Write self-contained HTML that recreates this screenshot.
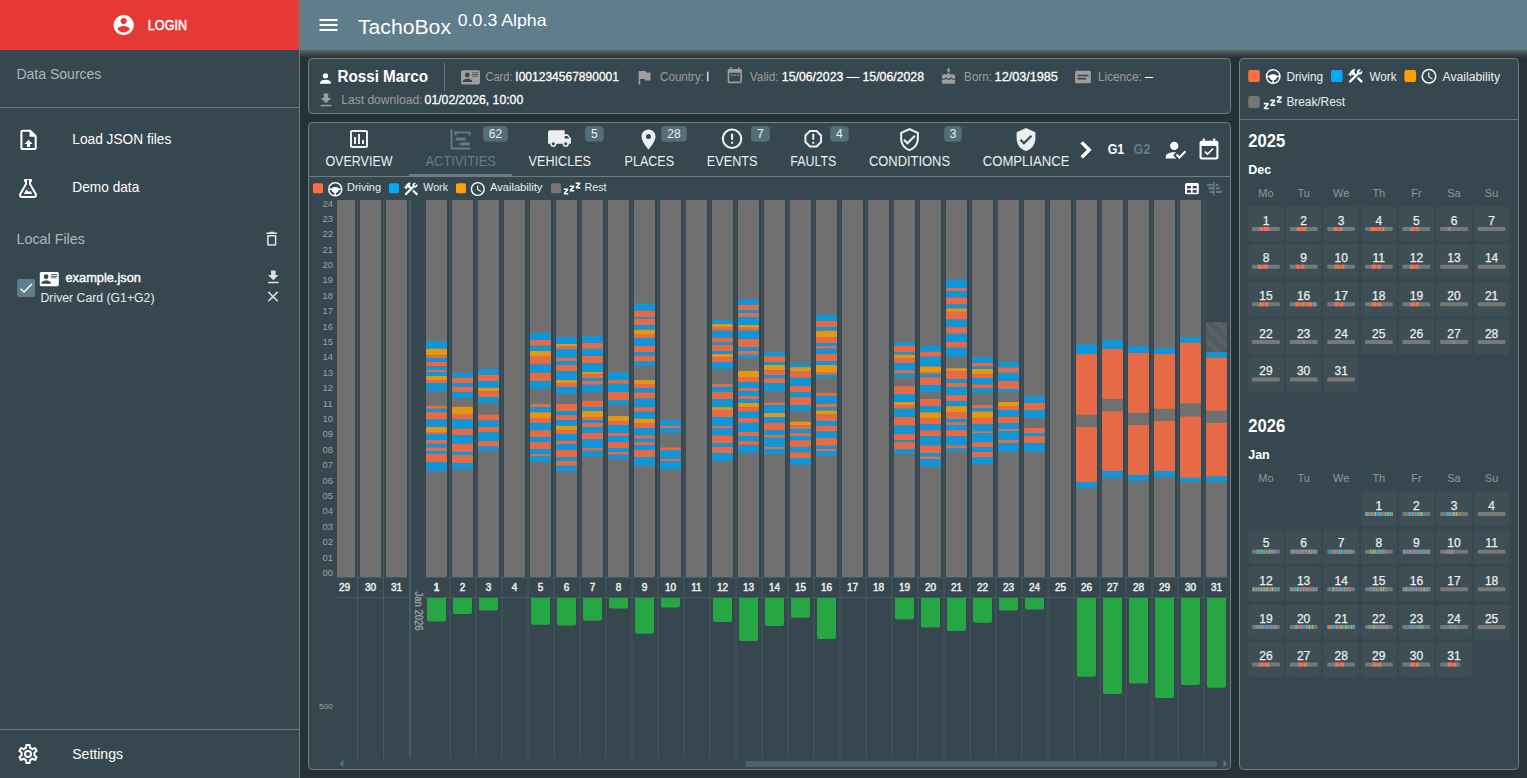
<!DOCTYPE html>
<html><head><meta charset="utf-8"><title>TachoBox</title><style>
*{margin:0;padding:0;box-sizing:border-box}
html,body{width:1527px;height:778px;overflow:hidden;background:#263238;font-family:"Liberation Sans", sans-serif}
.a{position:absolute}
svg text{font-family:"Liberation Sans", sans-serif}
</style></head>
<body>

<svg class="a" style="left:0;top:0" width="1527" height="778" viewBox="0 0 1527 778">
<rect x="0.00" y="0.00" width="299.00" height="778.00" rx="0" fill="#37474f" />
<rect x="299.00" y="0.00" width="1.00" height="778.00" rx="0" fill="#6f7b80" />
<rect x="0.00" y="0.00" width="299.00" height="50.00" rx="0" fill="#e53935" />
<path transform="translate(111.40,12.90) scale(1.0208)" d="M12,19.2C9.5,19.2 7.29,17.92 6,16C6.03,14 10,12.9 12,12.9C14,12.9 17.97,14 18,16C16.71,17.92 14.5,19.2 12,19.2M12,5A3,3 0 0,1 15,8A3,3 0 0,1 12,11A3,3 0 0,1 9,8A3,3 0 0,1 12,5M12,2A10,10 0 0,0 2,12A10,10 0 0,0 12,22A10,10 0 0,0 22,12C22,6.47 17.5,2 12,2Z" fill="#fff" />
<text x="147.80" y="30.10" font-size="15" font-weight="normal" fill="#fff" text-anchor="start" textLength="39.30" lengthAdjust="spacingAndGlyphs" stroke="#fff" stroke-width="0.5">LOGIN</text>
<text x="16.40" y="78.90" font-size="15" font-weight="normal" fill="#b0b8bc" text-anchor="start" textLength="85.00" lengthAdjust="spacingAndGlyphs" >Data Sources</text>
<rect x="0.00" y="107.00" width="299.00" height="1.00" rx="0" fill="#6f7b80" />
<path transform="translate(16.30,127.60) scale(1.0208)" d="M14,2H6A2,2 0 0,0 4,4V20A2,2 0 0,0 6,22H18A2,2 0 0,0 20,20V8L14,2M18,20H6V4H13V9H18V20M12,12L16,16H13.5V19H10.5V16H8L12,12Z" fill="#fff" />
<text x="72.30" y="144.10" font-size="15" font-weight="normal" fill="#fff" text-anchor="start" textLength="99.00" lengthAdjust="spacingAndGlyphs" >Load JSON files</text>
<path transform="translate(16.00,176.00) scale(1.0000)" d="M5,19A1,1 0 0,0 6,20H18A1,1 0 0,0 19,19C19,18.79 18.93,18.59 18.82,18.43L13,8.35V4H11V8.35L5.18,18.43C5.07,18.59 5,18.79 5,19M6,22A3,3 0 0,1 3,19C3,18.4 3.18,17.84 3.5,17.37L9,7.81V6A1,1 0 0,1 8,5V4A1,1 0 0,1 9,3H15A1,1 0 0,1 16,4V5A1,1 0 0,1 15,6V7.81L20.5,17.37C20.82,17.84 21,18.4 21,19A3,3 0 0,1 18,22H6M13,16L14.34,14.66L16.27,18H7.73L10.39,13.39L13,16M12.5,12A0.5,0.5 0 0,1 13,12.5A0.5,0.5 0 0,1 12.5,13A0.5,0.5 0 0,1 12,12.5A0.5,0.5 0 0,1 12.5,12Z" fill="#fff" />
<text x="72.30" y="192.00" font-size="15" font-weight="normal" fill="#fff" text-anchor="start" textLength="67.00" lengthAdjust="spacingAndGlyphs" >Demo data</text>
<text x="16.50" y="243.80" font-size="15" font-weight="normal" fill="#b0b8bc" text-anchor="start" textLength="68.40" lengthAdjust="spacingAndGlyphs" >Local Files</text>
<path transform="translate(262.50,229.50) scale(0.7708)" d="M6,19A2,2 0 0,0 8,21H16A2,2 0 0,0 18,19V7H6V19M8,9H16V19H8V9M15.5,4L14.5,3H9.5L8.5,4H5V6H19V4H15.5Z" fill="#e0e0e0" />
<rect x="17.10" y="279.10" width="18.00" height="18.00" rx="2" fill="#607d8b" />
<path transform="translate(17.60,279.60) scale(0.7083)" d="M21,7L9,19L3.5,13.5L4.91,12.09L9,16.17L19.59,5.59L21,7Z" fill="#fff" />
<path transform="translate(39.80,269.60) scale(0.7917)" d="M2,3H22C23.05,3 24,3.95 24,5V19C24,20.05 23.05,21 22,21H2C0.95,21 0,20.05 0,19V5C0,3.95 0.95,3 2,3M14,6V7H22V6H14M14,8V9H21.5L22,9V8H14M14,10V11H21V10H14M8,13.91C6,13.91 2,15 2,17V18H14V17C14,15 10,13.91 8,13.91M8,6A3,3 0 0,0 5,9A3,3 0 0,0 8,12A3,3 0 0,0 11,9A3,3 0 0,0 8,6Z" fill="#fff" />
<text x="65.50" y="282.30" font-size="13" font-weight="normal" fill="#fff" text-anchor="start" textLength="75.40" lengthAdjust="spacingAndGlyphs" stroke="#fff" stroke-width="0.4">example.json</text>
<text x="40.50" y="302.30" font-size="12" font-weight="normal" fill="#e8eaeb" text-anchor="start" textLength="114.00" lengthAdjust="spacingAndGlyphs" >Driver Card (G1+G2)</text>
<path transform="translate(264.30,268.30) scale(0.7500)" d="M5,20H19V18H5M19,9H15V3H9V9H5L12,16L19,9Z" fill="#e0e0e0" />
<path transform="translate(264.00,287.60) scale(0.7500)" d="M19,6.41L17.59,5L12,10.59L6.41,5L5,6.41L10.59,12L5,17.59L6.41,19L12,13.41L17.59,19L19,17.59L13.41,12L19,6.41Z" fill="#e0e0e0" />
<rect x="0.00" y="729.00" width="299.00" height="1.00" rx="0" fill="#6f7b80" />
<path transform="translate(16.00,742.00) scale(1.0000)" d="M12,8A4,4 0 0,1 16,12A4,4 0 0,1 12,16A4,4 0 0,1 8,12A4,4 0 0,1 12,8M12,10A2,2 0 0,0 10,12A2,2 0 0,0 12,14A2,2 0 0,0 14,12A2,2 0 0,0 12,10M10,22C9.75,22 9.54,21.82 9.5,21.58L9.13,18.93C8.5,18.68 7.96,18.34 7.44,17.94L4.95,18.95C4.73,19.03 4.46,18.95 4.34,18.73L2.34,15.27C2.21,15.05 2.27,14.78 2.46,14.63L4.57,12.97L4.5,12L4.57,11L2.46,9.37C2.27,9.22 2.21,8.95 2.34,8.73L4.34,5.27C4.46,5.05 4.73,4.96 4.95,5.05L7.44,6.05C7.96,5.66 8.5,5.32 9.13,5.07L9.5,2.42C9.54,2.18 9.75,2 10,2H14C14.25,2 14.46,2.18 14.5,2.42L14.87,5.07C15.5,5.32 16.04,5.66 16.56,6.05L19.05,5.05C19.27,4.96 19.54,5.05 19.66,5.27L21.66,8.73C21.79,8.95 21.73,9.22 21.54,9.37L19.43,11L19.5,12L19.43,13L21.54,14.63C21.73,14.78 21.79,15.05 21.66,15.27L19.66,18.73C19.54,18.95 19.27,19.04 19.05,18.95L16.56,17.95C16.04,18.34 15.5,18.68 14.87,18.93L14.5,21.58C14.46,21.82 14.25,22 14,22H10M11.25,4L10.88,6.61C9.68,6.86 8.62,7.5 7.85,8.39L5.44,7.35L4.69,8.65L6.8,10.2C6.4,11.37 6.4,12.64 6.8,13.8L4.68,15.36L5.43,16.66L7.86,15.62C8.63,16.5 9.68,17.14 10.87,17.38L11.24,20H12.76L13.13,17.39C14.32,17.14 15.37,16.5 16.14,15.62L18.57,16.66L19.32,15.36L17.2,13.81C17.6,12.64 17.6,11.37 17.2,10.2L19.31,8.65L18.56,7.35L16.15,8.39C15.38,7.5 14.32,6.86 13.12,6.62L12.75,4H11.25Z" fill="#fff" />
<text x="72.20" y="758.80" font-size="15" font-weight="normal" fill="#fff" text-anchor="start" textLength="50.80" lengthAdjust="spacingAndGlyphs" >Settings</text>
<rect x="300.00" y="0.00" width="1227.00" height="50.00" rx="0" fill="#607d8b" />
<path transform="translate(316.50,13.00) scale(1.0000)" d="M3,6H21V8H3V6M3,11H21V13H3V11M3,16H21V18H3V16Z" fill="#fff" />
<text x="358.00" y="33.90" font-size="20" font-weight="normal" fill="#fff" text-anchor="start" textLength="93.00" lengthAdjust="spacingAndGlyphs" >TachoBox</text>
<text x="457.80" y="25.70" font-size="16.5" font-weight="normal" fill="#fff" text-anchor="start" textLength="88.80" lengthAdjust="spacingAndGlyphs" >0.0.3 Alpha</text>
<defs><linearGradient id="sh" x1="0" y1="0" x2="0" y2="1"><stop offset="0" stop-color="#5b6469"/><stop offset="0.3" stop-color="#485257"/><stop offset="0.7" stop-color="#30393e"/><stop offset="1" stop-color="#263238"/></linearGradient></defs>
<rect x="300.00" y="50.00" width="1227.00" height="8.50" rx="0" fill="url(#sh)" />
<rect x="308.50" y="58.50" width="922.00" height="55.00" rx="4" fill="#37474f" stroke="#747f84" stroke-width="1"/>
<path transform="translate(317.50,70.50) scale(0.6667)" d="M12,4A4,4 0 0,1 16,8A4,4 0 0,1 12,12A4,4 0 0,1 8,8A4,4 0 0,1 12,4M12,14C16.42,14 20,15.79 20,18V20H4V18C4,15.79 7.58,14 12,14Z" fill="#fff" />
<text x="337.40" y="82.00" font-size="16" font-weight="bold" fill="#fff" text-anchor="start" textLength="90.60" lengthAdjust="spacingAndGlyphs" >Rossi Marco</text>
<rect x="444.00" y="63.00" width="1.00" height="28.00" rx="0" fill="#6f7b80" />
<path transform="translate(461.00,67.80) scale(0.7917)" d="M2,3H22C23.05,3 24,3.95 24,5V19C24,20.05 23.05,21 22,21H2C0.95,21 0,20.05 0,19V5C0,3.95 0.95,3 2,3M14,6V7H22V6H14M14,8V9H21.5L22,9V8H14M14,10V11H21V10H14M8,13.91C6,13.91 2,15 2,17V18H14V17C14,15 10,13.91 8,13.91M8,6A3,3 0 0,0 5,9A3,3 0 0,0 8,12A3,3 0 0,0 11,9A3,3 0 0,0 8,6Z" fill="#9e9e9e" />
<text x="485.50" y="81.00" font-size="12.5" font-weight="normal" fill="#9e9e9e" text-anchor="start" textLength="27.00" lengthAdjust="spacingAndGlyphs" >Card:</text>
<text x="515.30" y="81.00" font-size="12.5" font-weight="normal" fill="#fff" text-anchor="start" textLength="103.70" lengthAdjust="spacingAndGlyphs" stroke="#fff" stroke-width="0.3">I001234567890001</text>
<path transform="translate(634.70,67.80) scale(0.7917)" d="M14.4,6L14,4H5V21H7V14H12.6L13,16H20V6H14.4Z" fill="#9e9e9e" />
<text x="660.00" y="81.00" font-size="12.5" font-weight="normal" fill="#9e9e9e" text-anchor="start" textLength="44.00" lengthAdjust="spacingAndGlyphs" >Country:</text>
<text x="706.60" y="81.00" font-size="12.5" font-weight="normal" fill="#fff" text-anchor="start" textLength="2.40" lengthAdjust="spacingAndGlyphs" stroke="#fff" stroke-width="0.3">I</text>
<path transform="translate(725.30,66.50) scale(0.7917)" d="M19,19H5V8H19M16,1V3H8V1H6V3H5C3.89,3 3,3.89 3,5V19A2,2 0 0,0 5,21H19A2,2 0 0,0 21,19V5C21,3.89 20.1,3 19,3H18V1M7,10H9V12H7V10M11,10H13V12H11V10M15,10H17V12H15V10Z" fill="#9e9e9e" />
<text x="749.80" y="81.00" font-size="12.5" font-weight="normal" fill="#9e9e9e" text-anchor="start" textLength="28.80" lengthAdjust="spacingAndGlyphs" >Valid:</text>
<text x="781.80" y="81.00" font-size="12.5" font-weight="normal" fill="#fff" text-anchor="start" textLength="142.20" lengthAdjust="spacingAndGlyphs" stroke="#fff" stroke-width="0.3">15/06/2023 — 15/06/2028</text>
<path transform="translate(939.80,67.60) scale(0.7292)" d="M12,6C13.11,6 14,5.1 14,4C14,3.62 13.9,3.27 13.71,2.97L12,0L10.29,2.97C10.1,3.27 10,3.62 10,4A2,2 0 0,0 12,6M16.6,15.99L15.53,14.92L14.45,15.99C13.15,17.29 10.87,17.3 9.56,15.99L8.5,14.92L7.4,15.99C6.75,16.64 5.88,17 4.96,17C4.23,17 3.56,16.77 3,16.39V21A1,1 0 0,0 4,22H20A1,1 0 0,0 21,21V16.39C20.44,16.77 19.77,17 19.04,17C18.12,17 17.25,16.64 16.6,15.99M18,9H13V7H11V9H6A3,3 0 0,0 3,12V13.54C3,14.62 3.88,15.5 4.96,15.5C5.5,15.5 6,15.3 6.34,14.93L8.5,12.8L10.61,14.93C11.35,15.67 12.64,15.67 13.38,14.93L15.5,12.8L17.65,14.93C18,15.3 18.5,15.5 19.03,15.5C20.11,15.5 21,14.62 21,13.54V12A3,3 0 0,0 18,9Z" fill="#9e9e9e" />
<text x="964.10" y="81.00" font-size="12.5" font-weight="normal" fill="#9e9e9e" text-anchor="start" textLength="27.90" lengthAdjust="spacingAndGlyphs" >Born:</text>
<text x="994.60" y="81.00" font-size="12.5" font-weight="normal" fill="#fff" text-anchor="start" textLength="63.30" lengthAdjust="spacingAndGlyphs" stroke="#fff" stroke-width="0.3">12/03/1985</text>
<path transform="translate(1073.50,67.50) scale(0.7917)" d="M20,20H4A2,2 0 0,1 2,18V6A2,2 0 0,1 4,4H20A2,2 0 0,1 22,6V18A2,2 0 0,1 20,20M5,13V15H16V13H5M5,9V11H19V9H5Z" fill="#9e9e9e" />
<text x="1098.00" y="81.00" font-size="12.5" font-weight="normal" fill="#9e9e9e" text-anchor="start" textLength="43.70" lengthAdjust="spacingAndGlyphs" >Licence:</text>
<text x="1144.80" y="81.00" font-size="12.5" font-weight="normal" fill="#fff" text-anchor="start" textLength="8.20" lengthAdjust="spacingAndGlyphs" >–</text>
<path transform="translate(317.00,91.30) scale(0.7500)" d="M5,20H19V18H5M19,9H15V3H9V9H5L12,16L19,9Z" fill="#9e9e9e" />
<text x="341.20" y="104.00" font-size="12.5" font-weight="normal" fill="#9e9e9e" text-anchor="start" textLength="81.30" lengthAdjust="spacingAndGlyphs" >Last download:</text>
<text x="424.60" y="104.00" font-size="12.5" font-weight="normal" fill="#fff" text-anchor="start" textLength="98.60" lengthAdjust="spacingAndGlyphs" stroke="#fff" stroke-width="0.3">01/02/2026, 10:00</text>
<rect x="308.50" y="122.50" width="922.00" height="647.00" rx="4" fill="#37474f" stroke="#747f84" stroke-width="1"/>
<rect x="309.00" y="176.00" width="921.00" height="1.00" rx="0" fill="#6f7c82" />
<rect x="409.00" y="174.00" width="103.00" height="2.00" rx="0" fill="#607d8b" />
<path transform="translate(347.00,127.00) scale(1.0000)" d="M9,17H7V10H9V17M13,17H11V7H13V17M17,17H15V13H17V17M19,19H5V5H19V19.1M19,3H5C3.9,3 3,3.9 3,5V19C3,20.1 3.9,21 5,21H19C20.1,21 21,20.1 21,19V5C21,3.9 20.1,3 19,3Z" fill="#eceff1" />
<text x="325.40" y="166.00" font-size="14" font-weight="normal" fill="#eceff1" text-anchor="start" textLength="67.20" lengthAdjust="spacingAndGlyphs" >OVERVIEW</text>
<path transform="translate(448.50,127.50) scale(1.0000)" d="M2,2H4V20H22V22H2V2M7,10H17V13H7V10M11,15H21V18H11V15M6,4H22V8H20V6H8V8H6V4Z" fill="#607d8b" />
<text x="425.40" y="166.00" font-size="14" font-weight="normal" fill="#607d8b" text-anchor="start" textLength="70.60" lengthAdjust="spacingAndGlyphs" >ACTIVITIES</text>
<rect x="483.10" y="126.30" width="24.70" height="15.50" rx="4" fill="#546e7a" />
<text x="495.45" y="138.20" font-size="12" font-weight="normal" fill="#eceff1" text-anchor="middle" >62</text>
<path transform="translate(547.00,126.00) scale(1.0417)" d="M18,18.5A1.5,1.5 0 0,1 16.5,17A1.5,1.5 0 0,1 18,15.5A1.5,1.5 0 0,1 19.5,17A1.5,1.5 0 0,1 18,18.5M19.5,9.5L21.46,12H17V9.5M6,18.5A1.5,1.5 0 0,1 4.5,17A1.5,1.5 0 0,1 6,15.5A1.5,1.5 0 0,1 7.5,17A1.5,1.5 0 0,1 6,18.5M20,8H17V4H3C1.89,4 1,4.89 1,6V17H3A3,3 0 0,0 6,20A3,3 0 0,0 9,17H15A3,3 0 0,0 18,20A3,3 0 0,0 21,17H23V12L20,8Z" fill="#eceff1" />
<text x="528.60" y="166.00" font-size="14" font-weight="normal" fill="#eceff1" text-anchor="start" textLength="62.40" lengthAdjust="spacingAndGlyphs" >VEHICLES</text>
<rect x="585.10" y="126.30" width="18.60" height="15.50" rx="4" fill="#546e7a" />
<text x="594.40" y="138.20" font-size="12" font-weight="normal" fill="#eceff1" text-anchor="middle" >5</text>
<path transform="translate(636.50,127.50) scale(1.0000)" d="M12,11.5A2.5,2.5 0 0,1 9.5,9A2.5,2.5 0 0,1 12,6.5A2.5,2.5 0 0,1 14.5,9A2.5,2.5 0 0,1 12,11.5M12,2A7,7 0 0,0 5,9C5,14.25 12,22 12,22C12,22 19,14.25 19,9A7,7 0 0,0 12,2Z" fill="#eceff1" />
<text x="624.60" y="166.00" font-size="14" font-weight="normal" fill="#eceff1" text-anchor="start" textLength="49.40" lengthAdjust="spacingAndGlyphs" >PLACES</text>
<rect x="661.20" y="126.30" width="25.60" height="15.50" rx="4" fill="#546e7a" />
<text x="674.00" y="138.20" font-size="12" font-weight="normal" fill="#eceff1" text-anchor="middle" >28</text>
<path transform="translate(719.80,126.50) scale(1.0208)" d="M11,15H13V17H11V15M11,7H13V13H11V7M12,2C6.47,2 2,6.5 2,12A10,10 0 0,0 12,22A10,10 0 0,0 22,12A10,10 0 0,0 12,2M12,20A8,8 0 0,1 4,12A8,8 0 0,1 12,4A8,8 0 0,1 20,12A8,8 0 0,1 12,20Z" fill="#eceff1" />
<text x="706.80" y="166.00" font-size="14" font-weight="normal" fill="#eceff1" text-anchor="start" textLength="50.70" lengthAdjust="spacingAndGlyphs" >EVENTS</text>
<rect x="751.00" y="126.30" width="18.90" height="15.50" rx="4" fill="#546e7a" />
<text x="760.45" y="138.20" font-size="12" font-weight="normal" fill="#eceff1" text-anchor="middle" >7</text>
<path transform="translate(801.50,127.00) scale(0.9792)" d="M8.27,3L3,8.27V15.73L8.27,21H15.73C17.5,19.24 21,15.73 21,15.73V8.27L15.73,3M9.1,5H14.9L19,9.1V14.9L14.9,19H9.1L5,14.9V9.1M11,15H13V17H11V15M11,7H13V13H11V7" fill="#eceff1" />
<text x="790.30" y="166.00" font-size="14" font-weight="normal" fill="#eceff1" text-anchor="start" textLength="46.00" lengthAdjust="spacingAndGlyphs" >FAULTS</text>
<rect x="830.10" y="126.30" width="18.60" height="15.50" rx="4" fill="#546e7a" />
<text x="839.40" y="138.20" font-size="12" font-weight="normal" fill="#eceff1" text-anchor="middle" >4</text>
<path transform="translate(897.00,127.00) scale(1.0417)" d="M21,11C21,16.55 17.16,21.74 12,23C6.84,21.74 3,16.55 3,11V5L12,1L21,5V11M12,21C15.75,20 19,15.54 19,11.22V6.3L12,3.18L5,6.3V11.22C5,15.54 8.25,20 12,21M10,17L6,13L7.41,11.59L10,14.17L16.59,7.58L18,9" fill="#eceff1" />
<text x="869.00" y="166.00" font-size="14" font-weight="normal" fill="#eceff1" text-anchor="start" textLength="81.00" lengthAdjust="spacingAndGlyphs" >CONDITIONS</text>
<rect x="944.20" y="126.30" width="17.60" height="15.50" rx="4" fill="#546e7a" />
<text x="953.00" y="138.20" font-size="12" font-weight="normal" fill="#eceff1" text-anchor="middle" >3</text>
<path transform="translate(1013.50,127.00) scale(1.0417)" d="M12,1L3,5V11C3,16.55 6.84,21.74 12,23C17.16,21.74 21,16.55 21,11V5L12,1M10,17L6,13L7.41,11.59L10,14.17L16.59,7.58L18,9L10,17Z" fill="#eceff1" />
<text x="982.70" y="166.00" font-size="14" font-weight="normal" fill="#eceff1" text-anchor="start" textLength="86.80" lengthAdjust="spacingAndGlyphs" >COMPLIANCE</text>
<path transform="translate(1069.20,133.40) scale(1.3750)" d="M8.59,16.58L13.17,12L8.59,7.41L10,6L16,12L10,18L8.59,16.58Z" fill="#fff" stroke="#fff" stroke-width="0.7"/>
<text x="1107.70" y="153.80" font-size="14" font-weight="bold" fill="#fff" text-anchor="start" textLength="16.50" lengthAdjust="spacingAndGlyphs" >G1</text>
<text x="1133.60" y="153.80" font-size="14" font-weight="bold" fill="#607d8b" text-anchor="start" textLength="16.80" lengthAdjust="spacingAndGlyphs" >G2</text>
<path transform="translate(1162.70,137.50) scale(1.0458)" d="M21.1,12.5L22.5,13.91L15.97,20.5L12.5,17L13.9,15.59L15.97,17.67L21.1,12.5M10,17L13,20H3V18C3,15.79 6.58,14 11,14L12.89,14.11L10,17M11,4A4,4 0 0,1 15,8A4,4 0 0,1 11,12A4,4 0 0,1 7,8A4,4 0 0,1 11,4Z" fill="#fff" />
<path transform="translate(1196.40,137.50) scale(1.0500)" d="M19,19H5V8H19M19,3H18V1H16V3H8V1H6V3H5C3.89,3 3,3.9 3,5V19A2,2 0 0,0 5,21H19A2,2 0 0,0 21,19V5A2,2 0 0,0 19,3M16.53,11.06L15.47,10L10.59,14.88L8.47,12.76L7.41,13.82L10.59,17L16.53,11.06Z" fill="#fff" />
<path fill="#fff" fill-rule="evenodd" d="M1186.5,182.9 H1197.3 Q1198.8,182.9 1198.8,184.4 V192.8 Q1198.8,194.3 1197.3,194.3 H1186.5 Q1185,194.3 1185,192.8 V184.4 Q1185,182.9 1186.5,182.9 Z M1187,186 V188.4 H1190.9 V186 Z M1192.7,186 V188.4 H1196.8 V186 Z M1187,190.1 V192.7 H1190.9 V190.1 Z M1192.7,190.1 V192.7 H1196.8 V190.1 Z"/>
<rect x="313.00" y="183.30" width="10.00" height="10.00" rx="1.5" fill="#ff6e40" />
<path transform="translate(326.50,180.50) scale(0.7292)" d="M12,2A10,10 0 0,0 2,12A10,10 0 0,0 12,22A10,10 0 0,0 22,12A10,10 0 0,0 12,2M12,4C16.1,4 19.5,7.1 20,11H17C16.5,9.9 14.4,9 12,9C9.6,9 7.5,9.9 7,11H4C4.5,7.1 7.9,4 12,4M4,13H7C7.2,14.3 8.2,16.6 11,17V20C7.4,19.6 4.4,16.6 4,13M13,20V17C15.7,16.6 16.7,14.3 17,13H20C19.6,16.6 16.6,19.6 13,20Z" fill="#fff" />
<text x="347.00" y="191.00" font-size="11" font-weight="normal" fill="#eceff1" text-anchor="start" textLength="34.00" lengthAdjust="spacingAndGlyphs" >Driving</text>
<rect x="389.00" y="183.30" width="10.00" height="10.00" rx="1.5" fill="#03a9f4" />
<path transform="translate(402.50,180.50) scale(0.7083)" d="M13.78,15.3L19.78,21.3L21.89,19.14L15.89,13.14L13.78,15.3M17.5,10.1C17.11,10.1 16.69,10.05 16.36,9.91L4.97,21.25L2.86,19.14L10.27,11.74L8.5,9.96L7.78,10.66L6.33,9.25V12.11L5.63,12.81L2.11,9.25L2.81,8.55H5.62L4.22,7.14L7.78,3.58C8.95,2.5 10.83,2.5 12,3.58L9.89,5.74L11.3,7.14L10.59,7.85L12.38,9.63L14.2,7.75C14.06,7.42 14,7 14,6.63C14,4.66 15.56,3.11 17.5,3.11C18.09,3.11 18.61,3.25 19.08,3.53L16.41,6.2L17.91,7.7L20.58,5.03C20.86,5.5 21,6 21,6.63C21,8.55 19.45,10.1 17.5,10.1Z" fill="#fff" />
<text x="423.30" y="191.00" font-size="11" font-weight="normal" fill="#eceff1" text-anchor="start" textLength="24.70" lengthAdjust="spacingAndGlyphs" >Work</text>
<rect x="456.00" y="183.30" width="10.00" height="10.00" rx="1.5" fill="#ffa000" />
<path transform="translate(469.30,180.50) scale(0.7083)" d="M12,20A8,8 0 0,0 20,12A8,8 0 0,0 12,4A8,8 0 0,0 4,12A8,8 0 0,0 12,20M12,2A10,10 0 0,1 22,12A10,10 0 0,1 12,22C6.47,22 2,17.5 2,12A10,10 0 0,1 12,2M12.5,7V12.25L17,14.92L16.25,16.15L11,13V7H12.5Z" fill="#fff" />
<text x="490.00" y="191.00" font-size="11" font-weight="normal" fill="#eceff1" text-anchor="start" textLength="52.40" lengthAdjust="spacingAndGlyphs" >Availability</text>
<rect x="551.00" y="183.30" width="10.00" height="10.00" rx="1.5" fill="#757575" />
<path transform="translate(563.00,179.50) scale(0.7500)" d="M23,12H17V10L20.39,6H17V4H23V6L19.62,10H23V12M15,16H9V14L12.39,10H9V8H15V10L11.62,14H15V16M7,20H1V18L4.39,14H1V12H7V14L3.62,18H7V20Z" fill="#fff" />
<text x="584.60" y="191.00" font-size="11" font-weight="normal" fill="#eceff1" text-anchor="start" textLength="21.80" lengthAdjust="spacingAndGlyphs" >Rest</text>
<rect x="1213.20" y="181.90" width="1.50" height="13.70" rx="0" fill="#607d8b" />
<rect x="1207.10" y="183.90" width="6.30" height="2.00" rx="0" fill="#607d8b" />
<rect x="1216.00" y="183.90" width="2.10" height="2.00" rx="0" fill="#607d8b" />
<rect x="1208.50" y="187.10" width="4.90" height="2.30" rx="0" fill="#607d8b" />
<rect x="1216.00" y="187.10" width="3.70" height="2.30" rx="0" fill="#607d8b" />
<rect x="1209.90" y="190.90" width="3.50" height="2.10" rx="0" fill="#607d8b" />
<rect x="1216.00" y="190.90" width="5.90" height="2.10" rx="0" fill="#607d8b" />
<text x="333.00" y="575.90" font-size="9.5" font-weight="normal" fill="#9aa3a7" text-anchor="end" textLength="10.50" lengthAdjust="spacingAndGlyphs" >00</text>
<text x="333.00" y="560.51" font-size="9.5" font-weight="normal" fill="#9aa3a7" text-anchor="end" textLength="10.50" lengthAdjust="spacingAndGlyphs" >01</text>
<text x="333.00" y="545.12" font-size="9.5" font-weight="normal" fill="#9aa3a7" text-anchor="end" textLength="10.50" lengthAdjust="spacingAndGlyphs" >02</text>
<text x="333.00" y="529.73" font-size="9.5" font-weight="normal" fill="#9aa3a7" text-anchor="end" textLength="10.50" lengthAdjust="spacingAndGlyphs" >03</text>
<text x="333.00" y="514.34" font-size="9.5" font-weight="normal" fill="#9aa3a7" text-anchor="end" textLength="10.50" lengthAdjust="spacingAndGlyphs" >04</text>
<text x="333.00" y="498.95" font-size="9.5" font-weight="normal" fill="#9aa3a7" text-anchor="end" textLength="10.50" lengthAdjust="spacingAndGlyphs" >05</text>
<text x="333.00" y="483.56" font-size="9.5" font-weight="normal" fill="#9aa3a7" text-anchor="end" textLength="10.50" lengthAdjust="spacingAndGlyphs" >06</text>
<text x="333.00" y="468.17" font-size="9.5" font-weight="normal" fill="#9aa3a7" text-anchor="end" textLength="10.50" lengthAdjust="spacingAndGlyphs" >07</text>
<text x="333.00" y="452.78" font-size="9.5" font-weight="normal" fill="#9aa3a7" text-anchor="end" textLength="10.50" lengthAdjust="spacingAndGlyphs" >08</text>
<text x="333.00" y="437.39" font-size="9.5" font-weight="normal" fill="#9aa3a7" text-anchor="end" textLength="10.50" lengthAdjust="spacingAndGlyphs" >09</text>
<text x="333.00" y="422.00" font-size="9.5" font-weight="normal" fill="#9aa3a7" text-anchor="end" textLength="10.50" lengthAdjust="spacingAndGlyphs" >10</text>
<text x="333.00" y="406.61" font-size="9.5" font-weight="normal" fill="#9aa3a7" text-anchor="end" textLength="10.50" lengthAdjust="spacingAndGlyphs" >11</text>
<text x="333.00" y="391.22" font-size="9.5" font-weight="normal" fill="#9aa3a7" text-anchor="end" textLength="10.50" lengthAdjust="spacingAndGlyphs" >12</text>
<text x="333.00" y="375.83" font-size="9.5" font-weight="normal" fill="#9aa3a7" text-anchor="end" textLength="10.50" lengthAdjust="spacingAndGlyphs" >13</text>
<text x="333.00" y="360.44" font-size="9.5" font-weight="normal" fill="#9aa3a7" text-anchor="end" textLength="10.50" lengthAdjust="spacingAndGlyphs" >14</text>
<text x="333.00" y="345.05" font-size="9.5" font-weight="normal" fill="#9aa3a7" text-anchor="end" textLength="10.50" lengthAdjust="spacingAndGlyphs" >15</text>
<text x="333.00" y="329.66" font-size="9.5" font-weight="normal" fill="#9aa3a7" text-anchor="end" textLength="10.50" lengthAdjust="spacingAndGlyphs" >16</text>
<text x="333.00" y="314.27" font-size="9.5" font-weight="normal" fill="#9aa3a7" text-anchor="end" textLength="10.50" lengthAdjust="spacingAndGlyphs" >17</text>
<text x="333.00" y="298.88" font-size="9.5" font-weight="normal" fill="#9aa3a7" text-anchor="end" textLength="10.50" lengthAdjust="spacingAndGlyphs" >18</text>
<text x="333.00" y="283.49" font-size="9.5" font-weight="normal" fill="#9aa3a7" text-anchor="end" textLength="10.50" lengthAdjust="spacingAndGlyphs" >19</text>
<text x="333.00" y="268.10" font-size="9.5" font-weight="normal" fill="#9aa3a7" text-anchor="end" textLength="10.50" lengthAdjust="spacingAndGlyphs" >20</text>
<text x="333.00" y="252.71" font-size="9.5" font-weight="normal" fill="#9aa3a7" text-anchor="end" textLength="10.50" lengthAdjust="spacingAndGlyphs" >21</text>
<text x="333.00" y="237.32" font-size="9.5" font-weight="normal" fill="#9aa3a7" text-anchor="end" textLength="10.50" lengthAdjust="spacingAndGlyphs" >22</text>
<text x="333.00" y="221.93" font-size="9.5" font-weight="normal" fill="#9aa3a7" text-anchor="end" textLength="10.50" lengthAdjust="spacingAndGlyphs" >23</text>
<text x="333.00" y="206.54" font-size="9.5" font-weight="normal" fill="#9aa3a7" text-anchor="end" textLength="10.50" lengthAdjust="spacingAndGlyphs" >24</text>
<text x="333.00" y="708.50" font-size="8" font-weight="normal" fill="#9aa3a7" text-anchor="end" textLength="14.00" lengthAdjust="spacingAndGlyphs" >500</text>
<rect x="357.00" y="200.00" width="1.00" height="558.70" rx="0" fill="#485960" />
<rect x="383.00" y="200.00" width="1.00" height="558.70" rx="0" fill="#485960" />
<rect x="409.30" y="200.00" width="1.60" height="558.70" rx="0" fill="#4f6068" />
<rect x="449.50" y="200.00" width="1.00" height="558.70" rx="0" fill="#485960" />
<rect x="475.50" y="200.00" width="1.00" height="558.70" rx="0" fill="#485960" />
<rect x="501.50" y="200.00" width="1.00" height="558.70" rx="0" fill="#485960" />
<rect x="527.50" y="200.00" width="1.00" height="558.70" rx="0" fill="#485960" />
<rect x="553.50" y="200.00" width="1.00" height="558.70" rx="0" fill="#485960" />
<rect x="579.50" y="200.00" width="1.00" height="558.70" rx="0" fill="#485960" />
<rect x="605.50" y="200.00" width="1.00" height="558.70" rx="0" fill="#485960" />
<rect x="631.50" y="200.00" width="1.00" height="558.70" rx="0" fill="#485960" />
<rect x="657.50" y="200.00" width="1.00" height="558.70" rx="0" fill="#485960" />
<rect x="683.50" y="200.00" width="1.00" height="558.70" rx="0" fill="#485960" />
<rect x="709.50" y="200.00" width="1.00" height="558.70" rx="0" fill="#485960" />
<rect x="735.50" y="200.00" width="1.00" height="558.70" rx="0" fill="#485960" />
<rect x="761.50" y="200.00" width="1.00" height="558.70" rx="0" fill="#485960" />
<rect x="787.50" y="200.00" width="1.00" height="558.70" rx="0" fill="#485960" />
<rect x="813.50" y="200.00" width="1.00" height="558.70" rx="0" fill="#485960" />
<rect x="839.50" y="200.00" width="1.00" height="558.70" rx="0" fill="#485960" />
<rect x="865.50" y="200.00" width="1.00" height="558.70" rx="0" fill="#485960" />
<rect x="891.50" y="200.00" width="1.00" height="558.70" rx="0" fill="#485960" />
<rect x="917.50" y="200.00" width="1.00" height="558.70" rx="0" fill="#485960" />
<rect x="943.50" y="200.00" width="1.00" height="558.70" rx="0" fill="#485960" />
<rect x="969.50" y="200.00" width="1.00" height="558.70" rx="0" fill="#485960" />
<rect x="995.50" y="200.00" width="1.00" height="558.70" rx="0" fill="#485960" />
<rect x="1021.50" y="200.00" width="1.00" height="558.70" rx="0" fill="#485960" />
<rect x="1047.50" y="200.00" width="1.00" height="558.70" rx="0" fill="#485960" />
<rect x="1073.50" y="200.00" width="1.00" height="558.70" rx="0" fill="#485960" />
<rect x="1099.50" y="200.00" width="1.00" height="558.70" rx="0" fill="#485960" />
<rect x="1125.50" y="200.00" width="1.00" height="558.70" rx="0" fill="#485960" />
<rect x="1151.50" y="200.00" width="1.00" height="558.70" rx="0" fill="#485960" />
<rect x="1177.50" y="200.00" width="1.00" height="558.70" rx="0" fill="#485960" />
<rect x="1203.50" y="200.00" width="1.00" height="558.70" rx="0" fill="#485960" />
<rect x="335.00" y="577.00" width="74.00" height="1.00" rx="0" fill="#485960" />
<rect x="423.00" y="577.00" width="806.00" height="1.00" rx="0" fill="#485960" />
<rect x="335.00" y="597.00" width="74.00" height="1.00" rx="0" fill="#485960" />
<rect x="423.00" y="597.00" width="806.00" height="1.00" rx="0" fill="#485960" />
<rect x="337.00" y="200.00" width="18.00" height="377.00" rx="1" fill="#707070" />
<rect x="360.00" y="200.00" width="21.00" height="377.00" rx="1" fill="#707070" />
<rect x="386.00" y="200.00" width="21.00" height="377.00" rx="1" fill="#707070" />
<rect x="426.00" y="200.00" width="21.00" height="377.00" rx="1" fill="#707070" />
<rect x="426.00" y="341.00" width="21.00" height="7.70" rx="1.2" fill="#0e96d8" />
<rect x="426.00" y="348.70" width="21.00" height="6.80" rx="1.2" fill="#e5980f" />
<rect x="426.00" y="356.00" width="21.00" height="2.00" rx="1.2" fill="#e66a45" />
<rect x="426.00" y="358.00" width="21.00" height="3.80" rx="1.2" fill="#0e96d8" />
<rect x="426.00" y="362.00" width="21.00" height="4.00" rx="1.2" fill="#e66a45" />
<rect x="426.00" y="367.00" width="21.00" height="3.00" rx="1.2" fill="#0e96d8" />
<rect x="426.00" y="370.00" width="21.00" height="2.00" rx="1.2" fill="#e66a45" />
<rect x="426.00" y="372.00" width="21.00" height="4.00" rx="1.2" fill="#0e96d8" />
<rect x="426.00" y="376.00" width="21.00" height="4.00" rx="1.2" fill="#e5980f" />
<rect x="426.00" y="380.00" width="21.00" height="3.00" rx="1.2" fill="#e66a45" />
<rect x="426.00" y="383.00" width="21.00" height="8.00" rx="1.2" fill="#0e96d8" />
<rect x="426.00" y="405.80" width="21.00" height="2.90" rx="1.2" fill="#e66a45" />
<rect x="426.00" y="408.70" width="21.00" height="3.30" rx="1.2" fill="#0e96d8" />
<rect x="426.00" y="412.00" width="21.00" height="7.60" rx="1.2" fill="#e66a45" />
<rect x="426.00" y="419.60" width="21.00" height="7.40" rx="1.2" fill="#0e96d8" />
<rect x="426.00" y="427.00" width="21.00" height="5.00" rx="1.2" fill="#e5980f" />
<rect x="426.00" y="432.00" width="21.00" height="2.00" rx="1.2" fill="#e66a45" />
<rect x="426.00" y="434.00" width="21.00" height="6.00" rx="1.2" fill="#0e96d8" />
<rect x="426.00" y="440.00" width="21.00" height="3.70" rx="1.2" fill="#e66a45" />
<rect x="426.00" y="443.70" width="21.00" height="3.90" rx="1.2" fill="#0e96d8" />
<rect x="426.00" y="447.60" width="21.00" height="3.40" rx="1.2" fill="#e66a45" />
<rect x="426.00" y="451.00" width="21.00" height="3.00" rx="1.2" fill="#0e96d8" />
<rect x="426.00" y="454.00" width="21.00" height="8.00" rx="1.2" fill="#e66a45" />
<rect x="426.00" y="462.00" width="21.00" height="9.00" rx="1.2" fill="#0e96d8" />
<rect x="452.00" y="200.00" width="21.00" height="377.00" rx="1" fill="#707070" />
<rect x="452.00" y="372.80" width="21.00" height="5.00" rx="1.2" fill="#0e96d8" />
<rect x="452.00" y="377.80" width="21.00" height="5.20" rx="1.2" fill="#e66a45" />
<rect x="452.00" y="383.00" width="21.00" height="3.90" rx="1.2" fill="#0e96d8" />
<rect x="452.00" y="386.90" width="21.00" height="5.10" rx="1.2" fill="#e66a45" />
<rect x="452.00" y="392.00" width="21.00" height="5.90" rx="1.2" fill="#0e96d8" />
<rect x="452.00" y="406.70" width="21.00" height="7.20" rx="1.2" fill="#e5980f" />
<rect x="452.00" y="413.90" width="21.00" height="5.70" rx="1.2" fill="#e66a45" />
<rect x="452.00" y="419.60" width="21.00" height="9.10" rx="1.2" fill="#0e96d8" />
<rect x="452.00" y="428.70" width="21.00" height="6.30" rx="1.2" fill="#e66a45" />
<rect x="452.00" y="435.00" width="21.00" height="8.70" rx="1.2" fill="#0e96d8" />
<rect x="452.00" y="443.70" width="21.00" height="8.10" rx="1.2" fill="#e66a45" />
<rect x="452.00" y="451.80" width="21.00" height="3.10" rx="1.2" fill="#0e96d8" />
<rect x="452.00" y="454.90" width="21.00" height="8.10" rx="1.2" fill="#e66a45" />
<rect x="452.00" y="463.00" width="21.00" height="6.50" rx="1.2" fill="#0e96d8" />
<rect x="478.00" y="200.00" width="21.00" height="377.00" rx="1" fill="#707070" />
<rect x="478.00" y="369.00" width="21.00" height="5.70" rx="1.2" fill="#0e96d8" />
<rect x="478.00" y="374.70" width="21.00" height="6.30" rx="1.2" fill="#e66a45" />
<rect x="478.00" y="381.00" width="21.00" height="6.80" rx="1.2" fill="#0e96d8" />
<rect x="478.00" y="387.80" width="21.00" height="3.50" rx="1.2" fill="#e5980f" />
<rect x="478.00" y="391.30" width="21.00" height="5.70" rx="1.2" fill="#e66a45" />
<rect x="478.00" y="397.00" width="21.00" height="5.90" rx="1.2" fill="#0e96d8" />
<rect x="478.00" y="414.80" width="21.00" height="5.80" rx="1.2" fill="#e66a45" />
<rect x="478.00" y="420.60" width="21.00" height="6.40" rx="1.2" fill="#0e96d8" />
<rect x="478.00" y="427.00" width="21.00" height="5.20" rx="1.2" fill="#e66a45" />
<rect x="478.00" y="432.20" width="21.00" height="8.70" rx="1.2" fill="#0e96d8" />
<rect x="478.00" y="440.90" width="21.00" height="5.70" rx="1.2" fill="#e66a45" />
<rect x="478.00" y="446.60" width="21.00" height="4.40" rx="1.2" fill="#0e96d8" />
<rect x="504.00" y="200.00" width="21.00" height="377.00" rx="1" fill="#707070" />
<rect x="530.00" y="200.00" width="21.00" height="377.00" rx="1" fill="#707070" />
<rect x="530.00" y="332.70" width="21.00" height="7.30" rx="1.2" fill="#0e96d8" />
<rect x="530.00" y="340.00" width="21.00" height="5.80" rx="1.2" fill="#e66a45" />
<rect x="530.00" y="345.80" width="21.00" height="5.20" rx="1.2" fill="#0e96d8" />
<rect x="530.00" y="351.00" width="21.00" height="5.80" rx="1.2" fill="#e5980f" />
<rect x="530.00" y="356.80" width="21.00" height="7.80" rx="1.2" fill="#e66a45" />
<rect x="530.00" y="364.60" width="21.00" height="8.20" rx="1.2" fill="#0e96d8" />
<rect x="530.00" y="372.80" width="21.00" height="8.20" rx="1.2" fill="#e66a45" />
<rect x="530.00" y="381.00" width="21.00" height="7.70" rx="1.2" fill="#0e96d8" />
<rect x="530.00" y="404.10" width="21.00" height="2.90" rx="1.2" fill="#e66a45" />
<rect x="530.00" y="407.00" width="21.00" height="5.20" rx="1.2" fill="#0e96d8" />
<rect x="530.00" y="412.20" width="21.00" height="5.80" rx="1.2" fill="#e5980f" />
<rect x="530.00" y="418.00" width="21.00" height="5.00" rx="1.2" fill="#e66a45" />
<rect x="530.00" y="423.00" width="21.00" height="7.20" rx="1.2" fill="#0e96d8" />
<rect x="530.00" y="430.20" width="21.00" height="6.70" rx="1.2" fill="#e66a45" />
<rect x="530.00" y="436.90" width="21.00" height="5.20" rx="1.2" fill="#0e96d8" />
<rect x="530.00" y="442.10" width="21.00" height="6.80" rx="1.2" fill="#e66a45" />
<rect x="530.00" y="448.90" width="21.00" height="5.00" rx="1.2" fill="#0e96d8" />
<rect x="530.00" y="453.90" width="21.00" height="2.30" rx="1.2" fill="#e66a45" />
<rect x="530.00" y="456.20" width="21.00" height="5.80" rx="1.2" fill="#0e96d8" />
<rect x="556.00" y="200.00" width="21.00" height="377.00" rx="1" fill="#707070" />
<rect x="556.00" y="337.00" width="21.00" height="6.90" rx="1.2" fill="#0e96d8" />
<rect x="556.00" y="343.90" width="21.00" height="2.70" rx="1.2" fill="#e5980f" />
<rect x="556.00" y="346.60" width="21.00" height="2.50" rx="1.2" fill="#e66a45" />
<rect x="556.00" y="349.10" width="21.00" height="8.70" rx="1.2" fill="#0e96d8" />
<rect x="556.00" y="357.80" width="21.00" height="3.30" rx="1.2" fill="#e66a45" />
<rect x="556.00" y="361.10" width="21.00" height="4.00" rx="1.2" fill="#0e96d8" />
<rect x="556.00" y="365.10" width="21.00" height="6.20" rx="1.2" fill="#e66a45" />
<rect x="556.00" y="371.30" width="21.00" height="8.70" rx="1.2" fill="#0e96d8" />
<rect x="556.00" y="380.00" width="21.00" height="2.90" rx="1.2" fill="#e5980f" />
<rect x="556.00" y="382.90" width="21.00" height="4.20" rx="1.2" fill="#e66a45" />
<rect x="556.00" y="387.10" width="21.00" height="7.00" rx="1.2" fill="#0e96d8" />
<rect x="556.00" y="404.10" width="21.00" height="6.80" rx="1.2" fill="#e66a45" />
<rect x="556.00" y="410.90" width="21.00" height="4.40" rx="1.2" fill="#0e96d8" />
<rect x="556.00" y="415.30" width="21.00" height="4.60" rx="1.2" fill="#e66a45" />
<rect x="556.00" y="419.90" width="21.00" height="5.80" rx="1.2" fill="#0e96d8" />
<rect x="556.00" y="425.70" width="21.00" height="4.50" rx="1.2" fill="#e5980f" />
<rect x="556.00" y="430.20" width="21.00" height="3.80" rx="1.2" fill="#e66a45" />
<rect x="556.00" y="434.00" width="21.00" height="6.80" rx="1.2" fill="#0e96d8" />
<rect x="556.00" y="440.80" width="21.00" height="3.20" rx="1.2" fill="#e66a45" />
<rect x="556.00" y="444.00" width="21.00" height="6.00" rx="1.2" fill="#0e96d8" />
<rect x="556.00" y="450.00" width="21.00" height="7.20" rx="1.2" fill="#e66a45" />
<rect x="556.00" y="457.20" width="21.00" height="3.80" rx="1.2" fill="#0e96d8" />
<rect x="556.00" y="461.00" width="21.00" height="4.80" rx="1.2" fill="#e66a45" />
<rect x="556.00" y="465.80" width="21.00" height="5.40" rx="1.2" fill="#0e96d8" />
<rect x="582.00" y="200.00" width="21.00" height="377.00" rx="1" fill="#707070" />
<rect x="582.00" y="336.00" width="21.00" height="6.90" rx="1.2" fill="#0e96d8" />
<rect x="582.00" y="342.90" width="21.00" height="5.80" rx="1.2" fill="#e66a45" />
<rect x="582.00" y="348.70" width="21.00" height="7.20" rx="1.2" fill="#0e96d8" />
<rect x="582.00" y="355.90" width="21.00" height="7.30" rx="1.2" fill="#e66a45" />
<rect x="582.00" y="363.20" width="21.00" height="8.70" rx="1.2" fill="#0e96d8" />
<rect x="582.00" y="371.90" width="21.00" height="2.30" rx="1.2" fill="#e5980f" />
<rect x="582.00" y="374.20" width="21.00" height="3.90" rx="1.2" fill="#e66a45" />
<rect x="582.00" y="378.10" width="21.00" height="2.90" rx="1.2" fill="#0e96d8" />
<rect x="582.00" y="381.00" width="21.00" height="3.80" rx="1.2" fill="#e66a45" />
<rect x="582.00" y="384.80" width="21.00" height="7.30" rx="1.2" fill="#0e96d8" />
<rect x="582.00" y="400.80" width="21.00" height="6.20" rx="1.2" fill="#e66a45" />
<rect x="582.00" y="407.00" width="21.00" height="3.90" rx="1.2" fill="#0e96d8" />
<rect x="582.00" y="410.90" width="21.00" height="6.30" rx="1.2" fill="#e5980f" />
<rect x="582.00" y="417.20" width="21.00" height="2.70" rx="1.2" fill="#e66a45" />
<rect x="582.00" y="419.90" width="21.00" height="3.10" rx="1.2" fill="#0e96d8" />
<rect x="582.00" y="423.00" width="21.00" height="4.30" rx="1.2" fill="#e66a45" />
<rect x="582.00" y="427.30" width="21.00" height="5.70" rx="1.2" fill="#0e96d8" />
<rect x="582.00" y="433.00" width="21.00" height="6.20" rx="1.2" fill="#e66a45" />
<rect x="582.00" y="439.20" width="21.00" height="8.90" rx="1.2" fill="#0e96d8" />
<rect x="582.00" y="448.10" width="21.00" height="2.70" rx="1.2" fill="#e66a45" />
<rect x="582.00" y="450.80" width="21.00" height="5.40" rx="1.2" fill="#0e96d8" />
<rect x="608.00" y="200.00" width="21.00" height="377.00" rx="1" fill="#707070" />
<rect x="608.00" y="372.30" width="21.00" height="7.70" rx="1.2" fill="#0e96d8" />
<rect x="608.00" y="380.00" width="21.00" height="3.80" rx="1.2" fill="#e66a45" />
<rect x="608.00" y="383.80" width="21.00" height="8.30" rx="1.2" fill="#0e96d8" />
<rect x="608.00" y="392.10" width="21.00" height="7.80" rx="1.2" fill="#e66a45" />
<rect x="608.00" y="399.90" width="21.00" height="4.80" rx="1.2" fill="#0e96d8" />
<rect x="608.00" y="416.10" width="21.00" height="5.00" rx="1.2" fill="#e5980f" />
<rect x="608.00" y="421.10" width="21.00" height="3.90" rx="1.2" fill="#e66a45" />
<rect x="608.00" y="425.00" width="21.00" height="8.00" rx="1.2" fill="#0e96d8" />
<rect x="608.00" y="433.00" width="21.00" height="3.30" rx="1.2" fill="#e66a45" />
<rect x="608.00" y="436.30" width="21.00" height="5.80" rx="1.2" fill="#0e96d8" />
<rect x="608.00" y="442.10" width="21.00" height="5.80" rx="1.2" fill="#e66a45" />
<rect x="608.00" y="447.90" width="21.00" height="4.10" rx="1.2" fill="#0e96d8" />
<rect x="608.00" y="452.00" width="21.00" height="2.80" rx="1.2" fill="#e66a45" />
<rect x="608.00" y="454.80" width="21.00" height="4.30" rx="1.2" fill="#0e96d8" />
<rect x="634.00" y="200.00" width="21.00" height="377.00" rx="1" fill="#707070" />
<rect x="634.00" y="303.80" width="21.00" height="6.90" rx="1.2" fill="#0e96d8" />
<rect x="634.00" y="310.70" width="21.00" height="6.30" rx="1.2" fill="#e66a45" />
<rect x="634.00" y="317.00" width="21.00" height="1.80" rx="1.2" fill="#0e96d8" />
<rect x="634.00" y="318.80" width="21.00" height="6.30" rx="1.2" fill="#e66a45" />
<rect x="634.00" y="325.10" width="21.00" height="4.60" rx="1.2" fill="#0e96d8" />
<rect x="634.00" y="329.70" width="21.00" height="5.10" rx="1.2" fill="#e5980f" />
<rect x="634.00" y="334.80" width="21.00" height="3.40" rx="1.2" fill="#e66a45" />
<rect x="634.00" y="338.20" width="21.00" height="7.70" rx="1.2" fill="#0e96d8" />
<rect x="634.00" y="345.90" width="21.00" height="6.20" rx="1.2" fill="#e66a45" />
<rect x="634.00" y="352.10" width="21.00" height="3.70" rx="1.2" fill="#0e96d8" />
<rect x="634.00" y="355.80" width="21.00" height="5.60" rx="1.2" fill="#e66a45" />
<rect x="634.00" y="361.40" width="21.00" height="4.60" rx="1.2" fill="#0e96d8" />
<rect x="634.00" y="379.90" width="21.00" height="4.10" rx="1.2" fill="#e5980f" />
<rect x="634.00" y="384.00" width="21.00" height="4.00" rx="1.2" fill="#e66a45" />
<rect x="634.00" y="388.00" width="21.00" height="4.60" rx="1.2" fill="#0e96d8" />
<rect x="634.00" y="392.60" width="21.00" height="5.80" rx="1.2" fill="#e66a45" />
<rect x="634.00" y="398.40" width="21.00" height="8.80" rx="1.2" fill="#0e96d8" />
<rect x="634.00" y="407.20" width="21.00" height="4.60" rx="1.2" fill="#e66a45" />
<rect x="634.00" y="411.80" width="21.00" height="6.90" rx="1.2" fill="#0e96d8" />
<rect x="634.00" y="418.70" width="21.00" height="4.20" rx="1.2" fill="#e5980f" />
<rect x="634.00" y="422.90" width="21.00" height="5.10" rx="1.2" fill="#e66a45" />
<rect x="634.00" y="428.00" width="21.00" height="7.60" rx="1.2" fill="#0e96d8" />
<rect x="634.00" y="435.60" width="21.00" height="3.20" rx="1.2" fill="#e66a45" />
<rect x="634.00" y="438.80" width="21.00" height="3.10" rx="1.2" fill="#0e96d8" />
<rect x="634.00" y="441.90" width="21.00" height="3.00" rx="1.2" fill="#e66a45" />
<rect x="634.00" y="444.90" width="21.00" height="5.10" rx="1.2" fill="#0e96d8" />
<rect x="634.00" y="450.00" width="21.00" height="6.90" rx="1.2" fill="#e66a45" />
<rect x="634.00" y="456.90" width="21.00" height="8.80" rx="1.2" fill="#0e96d8" />
<rect x="660.00" y="200.00" width="21.00" height="377.00" rx="1" fill="#707070" />
<rect x="660.00" y="419.90" width="21.00" height="5.80" rx="1.2" fill="#0e96d8" />
<rect x="660.00" y="425.70" width="21.00" height="2.30" rx="1.2" fill="#e66a45" />
<rect x="660.00" y="428.00" width="21.00" height="5.10" rx="1.2" fill="#0e96d8" />
<rect x="660.00" y="447.60" width="21.00" height="3.00" rx="1.2" fill="#e66a45" />
<rect x="660.00" y="450.60" width="21.00" height="8.10" rx="1.2" fill="#0e96d8" />
<rect x="660.00" y="458.70" width="21.00" height="2.30" rx="1.2" fill="#e66a45" />
<rect x="660.00" y="461.00" width="21.00" height="8.60" rx="1.2" fill="#0e96d8" />
<rect x="686.00" y="200.00" width="21.00" height="377.00" rx="1" fill="#707070" />
<rect x="712.00" y="200.00" width="21.00" height="377.00" rx="1" fill="#707070" />
<rect x="712.00" y="320.00" width="21.00" height="3.90" rx="1.2" fill="#0e96d8" />
<rect x="712.00" y="323.90" width="21.00" height="3.00" rx="1.2" fill="#e5980f" />
<rect x="712.00" y="326.90" width="21.00" height="3.90" rx="1.2" fill="#e66a45" />
<rect x="712.00" y="330.80" width="21.00" height="7.00" rx="1.2" fill="#0e96d8" />
<rect x="712.00" y="337.80" width="21.00" height="4.20" rx="1.2" fill="#e66a45" />
<rect x="712.00" y="342.00" width="21.00" height="2.70" rx="1.2" fill="#0e96d8" />
<rect x="712.00" y="344.70" width="21.00" height="6.30" rx="1.2" fill="#e66a45" />
<rect x="712.00" y="351.00" width="21.00" height="3.00" rx="1.2" fill="#0e96d8" />
<rect x="712.00" y="354.00" width="21.00" height="3.00" rx="1.2" fill="#e5980f" />
<rect x="712.00" y="357.00" width="21.00" height="5.10" rx="1.2" fill="#e66a45" />
<rect x="712.00" y="362.10" width="21.00" height="6.90" rx="1.2" fill="#0e96d8" />
<rect x="712.00" y="384.00" width="21.00" height="3.00" rx="1.2" fill="#e66a45" />
<rect x="712.00" y="387.00" width="21.00" height="5.10" rx="1.2" fill="#0e96d8" />
<rect x="712.00" y="392.10" width="21.00" height="7.00" rx="1.2" fill="#e66a45" />
<rect x="712.00" y="399.10" width="21.00" height="8.10" rx="1.2" fill="#0e96d8" />
<rect x="712.00" y="407.20" width="21.00" height="3.00" rx="1.2" fill="#e5980f" />
<rect x="712.00" y="410.20" width="21.00" height="6.70" rx="1.2" fill="#e66a45" />
<rect x="712.00" y="416.90" width="21.00" height="9.20" rx="1.2" fill="#0e96d8" />
<rect x="712.00" y="426.10" width="21.00" height="2.30" rx="1.2" fill="#e66a45" />
<rect x="712.00" y="428.40" width="21.00" height="7.20" rx="1.2" fill="#0e96d8" />
<rect x="712.00" y="435.60" width="21.00" height="7.40" rx="1.2" fill="#e66a45" />
<rect x="712.00" y="443.00" width="21.00" height="3.90" rx="1.2" fill="#0e96d8" />
<rect x="712.00" y="446.90" width="21.00" height="6.10" rx="1.2" fill="#e66a45" />
<rect x="712.00" y="453.00" width="21.00" height="8.00" rx="1.2" fill="#0e96d8" />
<rect x="738.00" y="200.00" width="21.00" height="377.00" rx="1" fill="#707070" />
<rect x="738.00" y="299.60" width="21.00" height="5.30" rx="1.2" fill="#0e96d8" />
<rect x="738.00" y="304.90" width="21.00" height="5.10" rx="1.2" fill="#e66a45" />
<rect x="738.00" y="310.00" width="21.00" height="3.00" rx="1.2" fill="#0e96d8" />
<rect x="738.00" y="313.00" width="21.00" height="4.00" rx="1.2" fill="#e66a45" />
<rect x="738.00" y="317.00" width="21.00" height="8.10" rx="1.2" fill="#0e96d8" />
<rect x="738.00" y="325.10" width="21.00" height="2.70" rx="1.2" fill="#e5980f" />
<rect x="738.00" y="327.80" width="21.00" height="3.00" rx="1.2" fill="#e66a45" />
<rect x="738.00" y="330.80" width="21.00" height="8.10" rx="1.2" fill="#0e96d8" />
<rect x="738.00" y="338.90" width="21.00" height="8.10" rx="1.2" fill="#e66a45" />
<rect x="738.00" y="347.00" width="21.00" height="4.00" rx="1.2" fill="#0e96d8" />
<rect x="738.00" y="351.00" width="21.00" height="3.70" rx="1.2" fill="#e66a45" />
<rect x="738.00" y="354.70" width="21.00" height="3.20" rx="1.2" fill="#0e96d8" />
<rect x="738.00" y="370.90" width="21.00" height="6.20" rx="1.2" fill="#e5980f" />
<rect x="738.00" y="377.10" width="21.00" height="5.10" rx="1.2" fill="#e66a45" />
<rect x="738.00" y="382.20" width="21.00" height="5.80" rx="1.2" fill="#0e96d8" />
<rect x="738.00" y="388.00" width="21.00" height="3.00" rx="1.2" fill="#e66a45" />
<rect x="738.00" y="391.00" width="21.00" height="5.10" rx="1.2" fill="#0e96d8" />
<rect x="738.00" y="396.10" width="21.00" height="3.00" rx="1.2" fill="#e66a45" />
<rect x="738.00" y="399.10" width="21.00" height="3.90" rx="1.2" fill="#0e96d8" />
<rect x="738.00" y="403.00" width="21.00" height="4.20" rx="1.2" fill="#e5980f" />
<rect x="738.00" y="407.20" width="21.00" height="4.60" rx="1.2" fill="#e66a45" />
<rect x="738.00" y="411.80" width="21.00" height="6.20" rx="1.2" fill="#0e96d8" />
<rect x="738.00" y="418.00" width="21.00" height="4.70" rx="1.2" fill="#e66a45" />
<rect x="738.00" y="422.70" width="21.00" height="9.20" rx="1.2" fill="#0e96d8" />
<rect x="738.00" y="431.90" width="21.00" height="4.20" rx="1.2" fill="#e66a45" />
<rect x="738.00" y="436.10" width="21.00" height="5.10" rx="1.2" fill="#0e96d8" />
<rect x="738.00" y="441.20" width="21.00" height="3.70" rx="1.2" fill="#e66a45" />
<rect x="738.00" y="445.80" width="21.00" height="7.20" rx="1.2" fill="#0e96d8" />
<rect x="764.00" y="200.00" width="21.00" height="377.00" rx="1" fill="#707070" />
<rect x="764.00" y="351.70" width="21.00" height="4.60" rx="1.2" fill="#0e96d8" />
<rect x="764.00" y="356.30" width="21.00" height="5.80" rx="1.2" fill="#e66a45" />
<rect x="764.00" y="362.10" width="21.00" height="3.00" rx="1.2" fill="#0e96d8" />
<rect x="764.00" y="365.10" width="21.00" height="5.10" rx="1.2" fill="#e5980f" />
<rect x="764.00" y="370.20" width="21.00" height="5.00" rx="1.2" fill="#e66a45" />
<rect x="764.00" y="375.20" width="21.00" height="3.10" rx="1.2" fill="#0e96d8" />
<rect x="764.00" y="378.30" width="21.00" height="4.60" rx="1.2" fill="#e66a45" />
<rect x="764.00" y="382.90" width="21.00" height="8.10" rx="1.2" fill="#0e96d8" />
<rect x="764.00" y="402.50" width="21.00" height="2.40" rx="1.2" fill="#e66a45" />
<rect x="764.00" y="404.90" width="21.00" height="8.00" rx="1.2" fill="#0e96d8" />
<rect x="764.00" y="412.90" width="21.00" height="4.20" rx="1.2" fill="#e5980f" />
<rect x="764.00" y="417.10" width="21.00" height="5.60" rx="1.2" fill="#0e96d8" />
<rect x="764.00" y="422.70" width="21.00" height="7.60" rx="1.2" fill="#e66a45" />
<rect x="764.00" y="430.30" width="21.00" height="4.60" rx="1.2" fill="#0e96d8" />
<rect x="764.00" y="434.90" width="21.00" height="2.80" rx="1.2" fill="#e66a45" />
<rect x="764.00" y="437.70" width="21.00" height="9.20" rx="1.2" fill="#0e96d8" />
<rect x="764.00" y="446.90" width="21.00" height="2.40" rx="1.2" fill="#e66a45" />
<rect x="764.00" y="449.30" width="21.00" height="4.80" rx="1.2" fill="#0e96d8" />
<rect x="790.00" y="200.00" width="21.00" height="377.00" rx="1" fill="#707070" />
<rect x="790.00" y="363.20" width="21.00" height="4.00" rx="1.2" fill="#0e96d8" />
<rect x="790.00" y="367.20" width="21.00" height="3.70" rx="1.2" fill="#e5980f" />
<rect x="790.00" y="370.90" width="21.00" height="6.90" rx="1.2" fill="#e66a45" />
<rect x="790.00" y="377.80" width="21.00" height="8.10" rx="1.2" fill="#0e96d8" />
<rect x="790.00" y="385.90" width="21.00" height="6.20" rx="1.2" fill="#e66a45" />
<rect x="790.00" y="392.10" width="21.00" height="5.10" rx="1.2" fill="#0e96d8" />
<rect x="790.00" y="397.20" width="21.00" height="7.70" rx="1.2" fill="#e66a45" />
<rect x="790.00" y="404.90" width="21.00" height="6.20" rx="1.2" fill="#0e96d8" />
<rect x="790.00" y="421.70" width="21.00" height="3.50" rx="1.2" fill="#e5980f" />
<rect x="790.00" y="425.20" width="21.00" height="3.90" rx="1.2" fill="#e66a45" />
<rect x="790.00" y="429.10" width="21.00" height="4.00" rx="1.2" fill="#0e96d8" />
<rect x="790.00" y="433.10" width="21.00" height="3.00" rx="1.2" fill="#e66a45" />
<rect x="790.00" y="436.10" width="21.00" height="4.10" rx="1.2" fill="#0e96d8" />
<rect x="790.00" y="440.20" width="21.00" height="6.70" rx="1.2" fill="#e66a45" />
<rect x="790.00" y="446.90" width="21.00" height="5.40" rx="1.2" fill="#0e96d8" />
<rect x="790.00" y="452.30" width="21.00" height="5.70" rx="1.2" fill="#e66a45" />
<rect x="790.00" y="458.00" width="21.00" height="7.00" rx="1.2" fill="#0e96d8" />
<rect x="816.00" y="200.00" width="21.00" height="377.00" rx="1" fill="#707070" />
<rect x="816.00" y="314.70" width="21.00" height="6.20" rx="1.2" fill="#0e96d8" />
<rect x="816.00" y="320.90" width="21.00" height="6.00" rx="1.2" fill="#e66a45" />
<rect x="816.00" y="326.90" width="21.00" height="3.90" rx="1.2" fill="#0e96d8" />
<rect x="816.00" y="330.80" width="21.00" height="6.30" rx="1.2" fill="#e5980f" />
<rect x="816.00" y="337.10" width="21.00" height="5.80" rx="1.2" fill="#e66a45" />
<rect x="816.00" y="342.90" width="21.00" height="3.00" rx="1.2" fill="#0e96d8" />
<rect x="816.00" y="345.90" width="21.00" height="2.80" rx="1.2" fill="#e66a45" />
<rect x="816.00" y="348.70" width="21.00" height="5.30" rx="1.2" fill="#0e96d8" />
<rect x="816.00" y="354.00" width="21.00" height="6.90" rx="1.2" fill="#e66a45" />
<rect x="816.00" y="360.90" width="21.00" height="4.20" rx="1.2" fill="#0e96d8" />
<rect x="816.00" y="365.10" width="21.00" height="6.90" rx="1.2" fill="#e5980f" />
<rect x="816.00" y="372.00" width="21.00" height="2.80" rx="1.2" fill="#e66a45" />
<rect x="816.00" y="374.80" width="21.00" height="3.00" rx="1.2" fill="#0e96d8" />
<rect x="816.00" y="392.80" width="21.00" height="3.30" rx="1.2" fill="#e66a45" />
<rect x="816.00" y="396.10" width="21.00" height="7.60" rx="1.2" fill="#0e96d8" />
<rect x="816.00" y="403.70" width="21.00" height="3.90" rx="1.2" fill="#e66a45" />
<rect x="816.00" y="407.60" width="21.00" height="3.00" rx="1.2" fill="#0e96d8" />
<rect x="816.00" y="410.60" width="21.00" height="4.20" rx="1.2" fill="#e5980f" />
<rect x="816.00" y="414.80" width="21.00" height="6.20" rx="1.2" fill="#e66a45" />
<rect x="816.00" y="421.00" width="21.00" height="4.70" rx="1.2" fill="#0e96d8" />
<rect x="816.00" y="425.70" width="21.00" height="5.70" rx="1.2" fill="#e66a45" />
<rect x="816.00" y="431.40" width="21.00" height="6.50" rx="1.2" fill="#0e96d8" />
<rect x="816.00" y="437.90" width="21.00" height="7.90" rx="1.2" fill="#e66a45" />
<rect x="816.00" y="445.80" width="21.00" height="3.00" rx="1.2" fill="#0e96d8" />
<rect x="816.00" y="448.80" width="21.00" height="2.30" rx="1.2" fill="#e66a45" />
<rect x="816.00" y="451.10" width="21.00" height="4.60" rx="1.2" fill="#0e96d8" />
<rect x="842.00" y="200.00" width="21.00" height="377.00" rx="1" fill="#707070" />
<rect x="868.00" y="200.00" width="21.00" height="377.00" rx="1" fill="#707070" />
<rect x="894.00" y="200.00" width="21.00" height="377.00" rx="1" fill="#707070" />
<rect x="894.00" y="341.90" width="21.00" height="3.90" rx="1.2" fill="#0e96d8" />
<rect x="894.00" y="345.80" width="21.00" height="6.40" rx="1.2" fill="#e66a45" />
<rect x="894.00" y="352.20" width="21.00" height="2.60" rx="1.2" fill="#0e96d8" />
<rect x="894.00" y="354.80" width="21.00" height="3.30" rx="1.2" fill="#e5980f" />
<rect x="894.00" y="358.10" width="21.00" height="4.90" rx="1.2" fill="#e66a45" />
<rect x="894.00" y="363.00" width="21.00" height="7.20" rx="1.2" fill="#0e96d8" />
<rect x="894.00" y="370.20" width="21.00" height="3.10" rx="1.2" fill="#e66a45" />
<rect x="894.00" y="373.30" width="21.00" height="3.90" rx="1.2" fill="#0e96d8" />
<rect x="894.00" y="386.20" width="21.00" height="7.90" rx="1.2" fill="#e66a45" />
<rect x="894.00" y="394.10" width="21.00" height="7.80" rx="1.2" fill="#0e96d8" />
<rect x="894.00" y="401.90" width="21.00" height="3.10" rx="1.2" fill="#e5980f" />
<rect x="894.00" y="405.00" width="21.00" height="3.80" rx="1.2" fill="#e66a45" />
<rect x="894.00" y="408.80" width="21.00" height="8.20" rx="1.2" fill="#0e96d8" />
<rect x="894.00" y="417.00" width="21.00" height="8.50" rx="1.2" fill="#e66a45" />
<rect x="894.00" y="425.50" width="21.00" height="8.50" rx="1.2" fill="#0e96d8" />
<rect x="894.00" y="434.00" width="21.00" height="6.20" rx="1.2" fill="#e66a45" />
<rect x="894.00" y="440.20" width="21.00" height="2.10" rx="1.2" fill="#0e96d8" />
<rect x="894.00" y="442.30" width="21.00" height="6.90" rx="1.2" fill="#e66a45" />
<rect x="894.00" y="449.20" width="21.00" height="4.60" rx="1.2" fill="#0e96d8" />
<rect x="920.00" y="200.00" width="21.00" height="377.00" rx="1" fill="#707070" />
<rect x="920.00" y="345.80" width="21.00" height="5.90" rx="1.2" fill="#0e96d8" />
<rect x="920.00" y="351.70" width="21.00" height="5.10" rx="1.2" fill="#e66a45" />
<rect x="920.00" y="356.80" width="21.00" height="9.60" rx="1.2" fill="#0e96d8" />
<rect x="920.00" y="366.40" width="21.00" height="5.90" rx="1.2" fill="#e5980f" />
<rect x="920.00" y="372.30" width="21.00" height="1.80" rx="1.2" fill="#e66a45" />
<rect x="920.00" y="374.10" width="21.00" height="3.10" rx="1.2" fill="#0e96d8" />
<rect x="920.00" y="377.20" width="21.00" height="7.90" rx="1.2" fill="#e66a45" />
<rect x="920.00" y="385.10" width="21.00" height="7.00" rx="1.2" fill="#0e96d8" />
<rect x="920.00" y="399.00" width="21.00" height="7.20" rx="1.2" fill="#e66a45" />
<rect x="920.00" y="406.20" width="21.00" height="6.00" rx="1.2" fill="#0e96d8" />
<rect x="920.00" y="412.20" width="21.00" height="6.10" rx="1.2" fill="#e5980f" />
<rect x="920.00" y="418.30" width="21.00" height="6.00" rx="1.2" fill="#e66a45" />
<rect x="920.00" y="424.30" width="21.00" height="5.90" rx="1.2" fill="#0e96d8" />
<rect x="920.00" y="430.20" width="21.00" height="6.10" rx="1.2" fill="#e66a45" />
<rect x="920.00" y="436.30" width="21.00" height="9.10" rx="1.2" fill="#0e96d8" />
<rect x="920.00" y="445.40" width="21.00" height="7.70" rx="1.2" fill="#e66a45" />
<rect x="920.00" y="453.10" width="21.00" height="3.30" rx="1.2" fill="#0e96d8" />
<rect x="920.00" y="456.40" width="21.00" height="2.60" rx="1.2" fill="#e66a45" />
<rect x="920.00" y="459.00" width="21.00" height="7.70" rx="1.2" fill="#0e96d8" />
<rect x="946.00" y="200.00" width="21.00" height="377.00" rx="1" fill="#707070" />
<rect x="946.00" y="279.60" width="21.00" height="8.30" rx="1.2" fill="#0e96d8" />
<rect x="946.00" y="287.90" width="21.00" height="3.10" rx="1.2" fill="#e66a45" />
<rect x="946.00" y="291.00" width="21.00" height="6.60" rx="1.2" fill="#0e96d8" />
<rect x="946.00" y="297.60" width="21.00" height="7.00" rx="1.2" fill="#e66a45" />
<rect x="946.00" y="304.60" width="21.00" height="3.90" rx="1.2" fill="#0e96d8" />
<rect x="946.00" y="308.50" width="21.00" height="3.30" rx="1.2" fill="#e5980f" />
<rect x="946.00" y="311.80" width="21.00" height="7.70" rx="1.2" fill="#e66a45" />
<rect x="946.00" y="319.50" width="21.00" height="7.70" rx="1.2" fill="#0e96d8" />
<rect x="946.00" y="327.20" width="21.00" height="6.50" rx="1.2" fill="#e66a45" />
<rect x="946.00" y="333.70" width="21.00" height="8.20" rx="1.2" fill="#0e96d8" />
<rect x="946.00" y="341.90" width="21.00" height="5.90" rx="1.2" fill="#e66a45" />
<rect x="946.00" y="347.80" width="21.00" height="9.00" rx="1.2" fill="#0e96d8" />
<rect x="946.00" y="368.20" width="21.00" height="2.80" rx="1.2" fill="#e5980f" />
<rect x="946.00" y="371.00" width="21.00" height="8.20" rx="1.2" fill="#e66a45" />
<rect x="946.00" y="379.20" width="21.00" height="3.90" rx="1.2" fill="#0e96d8" />
<rect x="946.00" y="383.10" width="21.00" height="3.80" rx="1.2" fill="#e66a45" />
<rect x="946.00" y="386.90" width="21.00" height="8.30" rx="1.2" fill="#0e96d8" />
<rect x="946.00" y="395.20" width="21.00" height="5.90" rx="1.2" fill="#e66a45" />
<rect x="946.00" y="401.10" width="21.00" height="5.10" rx="1.2" fill="#0e96d8" />
<rect x="946.00" y="406.20" width="21.00" height="5.70" rx="1.2" fill="#e5980f" />
<rect x="946.00" y="411.90" width="21.00" height="7.20" rx="1.2" fill="#e66a45" />
<rect x="946.00" y="419.10" width="21.00" height="3.10" rx="1.2" fill="#0e96d8" />
<rect x="946.00" y="422.20" width="21.00" height="2.80" rx="1.2" fill="#e66a45" />
<rect x="946.00" y="425.00" width="21.00" height="5.20" rx="1.2" fill="#0e96d8" />
<rect x="946.00" y="430.20" width="21.00" height="6.10" rx="1.2" fill="#e66a45" />
<rect x="946.00" y="436.30" width="21.00" height="9.10" rx="1.2" fill="#0e96d8" />
<rect x="946.00" y="445.40" width="21.00" height="2.80" rx="1.2" fill="#e66a45" />
<rect x="946.00" y="448.20" width="21.00" height="3.10" rx="1.2" fill="#0e96d8" />
<rect x="972.00" y="200.00" width="21.00" height="377.00" rx="1" fill="#707070" />
<rect x="972.00" y="356.80" width="21.00" height="6.20" rx="1.2" fill="#0e96d8" />
<rect x="972.00" y="363.00" width="21.00" height="3.40" rx="1.2" fill="#e66a45" />
<rect x="972.00" y="366.40" width="21.00" height="2.50" rx="1.2" fill="#0e96d8" />
<rect x="972.00" y="368.90" width="21.00" height="5.20" rx="1.2" fill="#e5980f" />
<rect x="972.00" y="374.10" width="21.00" height="3.80" rx="1.2" fill="#e66a45" />
<rect x="972.00" y="377.90" width="21.00" height="6.50" rx="1.2" fill="#0e96d8" />
<rect x="972.00" y="384.40" width="21.00" height="3.80" rx="1.2" fill="#e66a45" />
<rect x="972.00" y="388.20" width="21.00" height="4.70" rx="1.2" fill="#0e96d8" />
<rect x="972.00" y="405.00" width="21.00" height="3.00" rx="1.2" fill="#e66a45" />
<rect x="972.00" y="408.00" width="21.00" height="3.40" rx="1.2" fill="#0e96d8" />
<rect x="972.00" y="411.40" width="21.00" height="6.90" rx="1.2" fill="#e5980f" />
<rect x="972.00" y="418.30" width="21.00" height="6.00" rx="1.2" fill="#e66a45" />
<rect x="972.00" y="424.30" width="21.00" height="6.90" rx="1.2" fill="#0e96d8" />
<rect x="972.00" y="431.20" width="21.00" height="2.10" rx="1.2" fill="#e66a45" />
<rect x="972.00" y="433.30" width="21.00" height="9.00" rx="1.2" fill="#0e96d8" />
<rect x="972.00" y="442.30" width="21.00" height="4.60" rx="1.2" fill="#e66a45" />
<rect x="972.00" y="446.90" width="21.00" height="5.10" rx="1.2" fill="#0e96d8" />
<rect x="972.00" y="452.00" width="21.00" height="5.00" rx="1.2" fill="#e66a45" />
<rect x="972.00" y="457.00" width="21.00" height="7.10" rx="1.2" fill="#0e96d8" />
<rect x="998.00" y="200.00" width="21.00" height="377.00" rx="1" fill="#707070" />
<rect x="998.00" y="361.80" width="21.00" height="5.80" rx="1.2" fill="#0e96d8" />
<rect x="998.00" y="367.60" width="21.00" height="5.10" rx="1.2" fill="#e66a45" />
<rect x="998.00" y="372.70" width="21.00" height="8.30" rx="1.2" fill="#0e96d8" />
<rect x="998.00" y="381.00" width="21.00" height="8.00" rx="1.2" fill="#e66a45" />
<rect x="998.00" y="389.00" width="21.00" height="3.00" rx="1.2" fill="#0e96d8" />
<rect x="998.00" y="401.90" width="21.00" height="4.10" rx="1.2" fill="#e5980f" />
<rect x="998.00" y="406.00" width="21.00" height="4.10" rx="1.2" fill="#e66a45" />
<rect x="998.00" y="410.10" width="21.00" height="6.60" rx="1.2" fill="#0e96d8" />
<rect x="998.00" y="416.70" width="21.00" height="6.20" rx="1.2" fill="#e66a45" />
<rect x="998.00" y="422.90" width="21.00" height="6.10" rx="1.2" fill="#0e96d8" />
<rect x="998.00" y="429.00" width="21.00" height="2.10" rx="1.2" fill="#e66a45" />
<rect x="998.00" y="431.10" width="21.00" height="8.80" rx="1.2" fill="#0e96d8" />
<rect x="998.00" y="439.90" width="21.00" height="3.10" rx="1.2" fill="#e66a45" />
<rect x="998.00" y="443.00" width="21.00" height="8.80" rx="1.2" fill="#0e96d8" />
<rect x="1024.00" y="200.00" width="21.00" height="377.00" rx="1" fill="#707070" />
<rect x="1024.00" y="396.20" width="21.00" height="6.70" rx="1.2" fill="#0e96d8" />
<rect x="1024.00" y="402.90" width="21.00" height="7.20" rx="1.2" fill="#e66a45" />
<rect x="1024.00" y="410.10" width="21.00" height="7.80" rx="1.2" fill="#0e96d8" />
<rect x="1024.00" y="428.00" width="21.00" height="5.10" rx="1.2" fill="#e66a45" />
<rect x="1024.00" y="433.10" width="21.00" height="3.10" rx="1.2" fill="#0e96d8" />
<rect x="1024.00" y="436.20" width="21.00" height="6.80" rx="1.2" fill="#e66a45" />
<rect x="1024.00" y="443.00" width="21.00" height="8.80" rx="1.2" fill="#0e96d8" />
<rect x="1050.00" y="200.00" width="21.00" height="377.00" rx="1" fill="#707070" />
<rect x="1076.00" y="200.00" width="21.00" height="377.00" rx="1" fill="#707070" />
<rect x="1076.00" y="344.00" width="21.00" height="10.20" rx="1.2" fill="#0e96d8" />
<rect x="1076.00" y="354.20" width="21.00" height="60.50" rx="1.2" fill="#e66a45" />
<rect x="1076.00" y="427.00" width="21.00" height="55.00" rx="1.2" fill="#e66a45" />
<rect x="1076.00" y="482.00" width="21.00" height="5.80" rx="1.2" fill="#0e96d8" />
<rect x="1102.00" y="200.00" width="21.00" height="377.00" rx="1" fill="#707070" />
<rect x="1102.00" y="339.90" width="21.00" height="9.00" rx="1.2" fill="#0e96d8" />
<rect x="1102.00" y="348.90" width="21.00" height="50.00" rx="1.2" fill="#e66a45" />
<rect x="1102.00" y="411.20" width="21.00" height="59.70" rx="1.2" fill="#e66a45" />
<rect x="1102.00" y="470.90" width="21.00" height="6.80" rx="1.2" fill="#0e96d8" />
<rect x="1128.00" y="200.00" width="21.00" height="377.00" rx="1" fill="#707070" />
<rect x="1128.00" y="346.00" width="21.00" height="7.00" rx="1.2" fill="#0e96d8" />
<rect x="1128.00" y="353.00" width="21.00" height="59.90" rx="1.2" fill="#e66a45" />
<rect x="1128.00" y="425.00" width="21.00" height="50.00" rx="1.2" fill="#e66a45" />
<rect x="1128.00" y="475.00" width="21.00" height="5.80" rx="1.2" fill="#0e96d8" />
<rect x="1154.00" y="200.00" width="21.00" height="377.00" rx="1" fill="#707070" />
<rect x="1154.00" y="348.10" width="21.00" height="6.00" rx="1.2" fill="#0e96d8" />
<rect x="1154.00" y="354.10" width="21.00" height="54.70" rx="1.2" fill="#e66a45" />
<rect x="1154.00" y="421.10" width="21.00" height="49.80" rx="1.2" fill="#e66a45" />
<rect x="1154.00" y="470.90" width="21.00" height="6.20" rx="1.2" fill="#0e96d8" />
<rect x="1180.00" y="200.00" width="21.00" height="377.00" rx="1" fill="#707070" />
<rect x="1180.00" y="337.20" width="21.00" height="5.60" rx="1.2" fill="#0e96d8" />
<rect x="1180.00" y="342.80" width="21.00" height="60.80" rx="1.2" fill="#e66a45" />
<rect x="1180.00" y="416.40" width="21.00" height="61.30" rx="1.2" fill="#e66a45" />
<rect x="1180.00" y="477.70" width="21.00" height="4.10" rx="1.2" fill="#0e96d8" />
<defs><pattern id="hatch" width="10" height="10" patternUnits="userSpaceOnUse" patternTransform="rotate(-45)"><rect width="10" height="10" fill="#535a5e"/><rect width="5" height="10" fill="#5a6063"/></pattern></defs>
<rect x="1206.00" y="322.00" width="21.00" height="30.00" rx="1" fill="url(#hatch)" />
<rect x="1206.00" y="352.00" width="21.00" height="225.00" rx="1.5" fill="#707070" />
<rect x="1206.00" y="352.20" width="21.00" height="5.60" rx="1.2" fill="#0e96d8" />
<rect x="1206.00" y="357.80" width="21.00" height="53.00" rx="1.2" fill="#e66a45" />
<rect x="1206.00" y="423.00" width="21.00" height="53.60" rx="1.2" fill="#e66a45" />
<rect x="1206.00" y="476.60" width="21.00" height="5.20" rx="1.2" fill="#0e96d8" />
<text x="344.60" y="591.00" font-size="10" font-weight="normal" fill="#eceff1" text-anchor="middle" stroke="#eceff1" stroke-width="0.45">29</text>
<text x="370.50" y="591.00" font-size="10" font-weight="normal" fill="#eceff1" text-anchor="middle" stroke="#eceff1" stroke-width="0.45">30</text>
<text x="396.50" y="591.00" font-size="10" font-weight="normal" fill="#eceff1" text-anchor="middle" stroke="#eceff1" stroke-width="0.45">31</text>
<text x="436.50" y="591.00" font-size="10" font-weight="bold" fill="#eceff1" text-anchor="middle" stroke="#eceff1" stroke-width="0.45">1</text>
<text x="462.50" y="591.00" font-size="10" font-weight="normal" fill="#eceff1" text-anchor="middle" stroke="#eceff1" stroke-width="0.45">2</text>
<text x="488.50" y="591.00" font-size="10" font-weight="normal" fill="#eceff1" text-anchor="middle" stroke="#eceff1" stroke-width="0.45">3</text>
<text x="514.50" y="591.00" font-size="10" font-weight="normal" fill="#eceff1" text-anchor="middle" stroke="#eceff1" stroke-width="0.45">4</text>
<text x="540.50" y="591.00" font-size="10" font-weight="normal" fill="#eceff1" text-anchor="middle" stroke="#eceff1" stroke-width="0.45">5</text>
<text x="566.50" y="591.00" font-size="10" font-weight="normal" fill="#eceff1" text-anchor="middle" stroke="#eceff1" stroke-width="0.45">6</text>
<text x="592.50" y="591.00" font-size="10" font-weight="normal" fill="#eceff1" text-anchor="middle" stroke="#eceff1" stroke-width="0.45">7</text>
<text x="618.50" y="591.00" font-size="10" font-weight="normal" fill="#eceff1" text-anchor="middle" stroke="#eceff1" stroke-width="0.45">8</text>
<text x="644.50" y="591.00" font-size="10" font-weight="normal" fill="#eceff1" text-anchor="middle" stroke="#eceff1" stroke-width="0.45">9</text>
<text x="670.50" y="591.00" font-size="10" font-weight="normal" fill="#eceff1" text-anchor="middle" stroke="#eceff1" stroke-width="0.45">10</text>
<text x="696.50" y="591.00" font-size="10" font-weight="normal" fill="#eceff1" text-anchor="middle" stroke="#eceff1" stroke-width="0.45">11</text>
<text x="722.50" y="591.00" font-size="10" font-weight="normal" fill="#eceff1" text-anchor="middle" stroke="#eceff1" stroke-width="0.45">12</text>
<text x="748.50" y="591.00" font-size="10" font-weight="normal" fill="#eceff1" text-anchor="middle" stroke="#eceff1" stroke-width="0.45">13</text>
<text x="774.50" y="591.00" font-size="10" font-weight="normal" fill="#eceff1" text-anchor="middle" stroke="#eceff1" stroke-width="0.45">14</text>
<text x="800.50" y="591.00" font-size="10" font-weight="normal" fill="#eceff1" text-anchor="middle" stroke="#eceff1" stroke-width="0.45">15</text>
<text x="826.50" y="591.00" font-size="10" font-weight="normal" fill="#eceff1" text-anchor="middle" stroke="#eceff1" stroke-width="0.45">16</text>
<text x="852.50" y="591.00" font-size="10" font-weight="normal" fill="#eceff1" text-anchor="middle" stroke="#eceff1" stroke-width="0.45">17</text>
<text x="878.50" y="591.00" font-size="10" font-weight="normal" fill="#eceff1" text-anchor="middle" stroke="#eceff1" stroke-width="0.45">18</text>
<text x="904.50" y="591.00" font-size="10" font-weight="normal" fill="#eceff1" text-anchor="middle" stroke="#eceff1" stroke-width="0.45">19</text>
<text x="930.50" y="591.00" font-size="10" font-weight="normal" fill="#eceff1" text-anchor="middle" stroke="#eceff1" stroke-width="0.45">20</text>
<text x="956.50" y="591.00" font-size="10" font-weight="normal" fill="#eceff1" text-anchor="middle" stroke="#eceff1" stroke-width="0.45">21</text>
<text x="982.50" y="591.00" font-size="10" font-weight="normal" fill="#eceff1" text-anchor="middle" stroke="#eceff1" stroke-width="0.45">22</text>
<text x="1008.50" y="591.00" font-size="10" font-weight="normal" fill="#eceff1" text-anchor="middle" stroke="#eceff1" stroke-width="0.45">23</text>
<text x="1034.50" y="591.00" font-size="10" font-weight="normal" fill="#eceff1" text-anchor="middle" stroke="#eceff1" stroke-width="0.45">24</text>
<text x="1060.50" y="591.00" font-size="10" font-weight="normal" fill="#eceff1" text-anchor="middle" stroke="#eceff1" stroke-width="0.45">25</text>
<text x="1086.50" y="591.00" font-size="10" font-weight="normal" fill="#eceff1" text-anchor="middle" stroke="#eceff1" stroke-width="0.45">26</text>
<text x="1112.50" y="591.00" font-size="10" font-weight="normal" fill="#eceff1" text-anchor="middle" stroke="#eceff1" stroke-width="0.45">27</text>
<text x="1138.50" y="591.00" font-size="10" font-weight="normal" fill="#eceff1" text-anchor="middle" stroke="#eceff1" stroke-width="0.45">28</text>
<text x="1164.50" y="591.00" font-size="10" font-weight="normal" fill="#eceff1" text-anchor="middle" stroke="#eceff1" stroke-width="0.45">29</text>
<text x="1190.50" y="591.00" font-size="10" font-weight="normal" fill="#eceff1" text-anchor="middle" stroke="#eceff1" stroke-width="0.45">30</text>
<text x="1216.50" y="591.00" font-size="10" font-weight="normal" fill="#eceff1" text-anchor="middle" stroke="#eceff1" stroke-width="0.45">31</text>
<text x="0.00" y="0.00" font-size="10" font-weight="normal" fill="#9aa3a7" text-anchor="start" textLength="39.00" lengthAdjust="spacingAndGlyphs" stroke="#9aa3a7" stroke-width="0.35" transform="translate(414.8,591.5) rotate(90)">Jan 2026</text>
<path d="M427,598 H446 V619.5 Q446,621.5 444,621.5 H429 Q427,621.5 427,619.5 Z" fill="#27a644"/>
<path d="M453,598 H472 V612.1 Q472,614.1 470,614.1 H455 Q453,614.1 453,612.1 Z" fill="#27a644"/>
<path d="M479,598 H498 V608.4 Q498,610.4 496,610.4 H481 Q479,610.4 479,608.4 Z" fill="#27a644"/>
<path d="M531,598 H550 V622.8 Q550,624.8 548,624.8 H533 Q531,624.8 531,622.8 Z" fill="#27a644"/>
<path d="M557,598 H576 V623.6 Q576,625.6 574,625.6 H559 Q557,625.6 557,623.6 Z" fill="#27a644"/>
<path d="M583,598 H602 V618.7 Q602,620.7 600,620.7 H585 Q583,620.7 583,618.7 Z" fill="#27a644"/>
<path d="M609,598 H628 V606.4 Q628,608.4 626,608.4 H611 Q609,608.4 609,606.4 Z" fill="#27a644"/>
<path d="M635,598 H654 V631.8 Q654,633.8 652,633.8 H637 Q635,633.8 635,631.8 Z" fill="#27a644"/>
<path d="M661,598 H680 V605.6 Q680,607.6 678,607.6 H663 Q661,607.6 661,605.6 Z" fill="#27a644"/>
<path d="M713,598 H732 V619.9 Q732,621.9 730,621.9 H715 Q713,621.9 713,619.9 Z" fill="#27a644"/>
<path d="M739,598 H758 V638.9 Q758,640.9 756,640.9 H741 Q739,640.9 739,638.9 Z" fill="#27a644"/>
<path d="M765,598 H784 V623.9 Q784,625.9 782,625.9 H767 Q765,625.9 765,623.9 Z" fill="#27a644"/>
<path d="M791,598 H810 V615.8 Q810,617.8 808,617.8 H793 Q791,617.8 791,615.8 Z" fill="#27a644"/>
<path d="M817,598 H836 V636.9 Q836,638.9 834,638.9 H819 Q817,638.9 817,636.9 Z" fill="#27a644"/>
<path d="M895,598 H914 V617.4 Q914,619.4 912,619.4 H897 Q895,619.4 895,617.4 Z" fill="#27a644"/>
<path d="M921,598 H940 V625.6 Q940,627.6 938,627.6 H923 Q921,627.6 921,625.6 Z" fill="#27a644"/>
<path d="M947,598 H966 V628.9 Q966,630.9 964,630.9 H949 Q947,630.9 947,628.9 Z" fill="#27a644"/>
<path d="M973,598 H992 V620.7 Q992,622.7 990,622.7 H975 Q973,622.7 973,620.7 Z" fill="#27a644"/>
<path d="M999,598 H1018 V608.4 Q1018,610.4 1016,610.4 H1001 Q999,610.4 999,608.4 Z" fill="#27a644"/>
<path d="M1025,598 H1044 V607.6 Q1044,609.6 1042,609.6 H1027 Q1025,609.6 1025,607.6 Z" fill="#27a644"/>
<path d="M1077,598 H1096 V674.7 Q1096,676.7 1094,676.7 H1079 Q1077,676.7 1077,674.7 Z" fill="#27a644"/>
<path d="M1103,598 H1122 V691.9 Q1122,693.9 1120,693.9 H1105 Q1103,693.9 1103,691.9 Z" fill="#27a644"/>
<path d="M1129,598 H1148 V681.6 Q1148,683.6 1146,683.6 H1131 Q1129,683.6 1129,681.6 Z" fill="#27a644"/>
<path d="M1155,598 H1174 V695.9 Q1174,697.9 1172,697.9 H1157 Q1155,697.9 1155,695.9 Z" fill="#27a644"/>
<path d="M1181,598 H1200 V682.9 Q1200,684.9 1198,684.9 H1183 Q1181,684.9 1181,682.9 Z" fill="#27a644"/>
<path d="M1207,598 H1226 V685.7 Q1226,687.7 1224,687.7 H1209 Q1207,687.7 1207,685.7 Z" fill="#27a644"/>
<rect x="745.00" y="761.00" width="472.00" height="6.00" rx="3" fill="#4e626c" />
<path d="M339.5,763.7 L343.5,760 V767.4 Z" fill="#56707c"/>
<path d="M1227.5,763.7 L1223.5,760 V767.4 Z" fill="#56707c"/>
<rect x="1239.50" y="58.50" width="279.00" height="711.00" rx="4" fill="#37474f" stroke="#747f84" stroke-width="1"/>
<rect x="1248.20" y="70.00" width="11.60" height="12.00" rx="2" fill="#ff6e40" />
<path transform="translate(1264.20,67.50) scale(0.7500)" d="M12,2A10,10 0 0,0 2,12A10,10 0 0,0 12,22A10,10 0 0,0 22,12A10,10 0 0,0 12,2M12,4C16.1,4 19.5,7.1 20,11H17C16.5,9.9 14.4,9 12,9C9.6,9 7.5,9.9 7,11H4C4.5,7.1 7.9,4 12,4M4,13H7C7.2,14.3 8.2,16.6 11,17V20C7.4,19.6 4.4,16.6 4,13M13,20V17C15.7,16.6 16.7,14.3 17,13H20C19.6,16.6 16.6,19.6 13,20Z" fill="#fff" />
<text x="1286.40" y="80.50" font-size="12.5" font-weight="normal" fill="#eceff1" text-anchor="start" textLength="36.60" lengthAdjust="spacingAndGlyphs" >Driving</text>
<rect x="1331.00" y="70.00" width="11.60" height="12.00" rx="2" fill="#03a9f4" />
<path transform="translate(1346.50,67.00) scale(0.7500)" d="M13.78,15.3L19.78,21.3L21.89,19.14L15.89,13.14L13.78,15.3M17.5,10.1C17.11,10.1 16.69,10.05 16.36,9.91L4.97,21.25L2.86,19.14L10.27,11.74L8.5,9.96L7.78,10.66L6.33,9.25V12.11L5.63,12.81L2.11,9.25L2.81,8.55H5.62L4.22,7.14L7.78,3.58C8.95,2.5 10.83,2.5 12,3.58L9.89,5.74L11.3,7.14L10.59,7.85L12.38,9.63L14.2,7.75C14.06,7.42 14,7 14,6.63C14,4.66 15.56,3.11 17.5,3.11C18.09,3.11 18.61,3.25 19.08,3.53L16.41,6.2L17.91,7.7L20.58,5.03C20.86,5.5 21,6 21,6.63C21,8.55 19.45,10.1 17.5,10.1Z" fill="#fff" />
<text x="1369.50" y="80.50" font-size="12.5" font-weight="normal" fill="#eceff1" text-anchor="start" textLength="27.00" lengthAdjust="spacingAndGlyphs" >Work</text>
<rect x="1404.50" y="70.00" width="11.60" height="12.00" rx="2" fill="#ffa000" />
<path transform="translate(1420.00,67.30) scale(0.7500)" d="M12,20A8,8 0 0,0 20,12A8,8 0 0,0 12,4A8,8 0 0,0 4,12A8,8 0 0,0 12,20M12,2A10,10 0 0,1 22,12A10,10 0 0,1 12,22C6.47,22 2,17.5 2,12A10,10 0 0,1 12,2M12.5,7V12.25L17,14.92L16.25,16.15L11,13V7H12.5Z" fill="#fff" />
<text x="1442.50" y="80.50" font-size="12.5" font-weight="normal" fill="#eceff1" text-anchor="start" textLength="57.50" lengthAdjust="spacingAndGlyphs" >Availability</text>
<rect x="1248.20" y="96.00" width="11.60" height="12.00" rx="2" fill="#757575" />
<path transform="translate(1263.00,93.00) scale(0.8125)" d="M23,12H17V10L20.39,6H17V4H23V6L19.62,10H23V12M15,16H9V14L12.39,10H9V8H15V10L11.62,14H15V16M7,20H1V18L4.39,14H1V12H7V14L3.62,18H7V20Z" fill="#fff" />
<text x="1286.40" y="106.40" font-size="12.5" font-weight="normal" fill="#eceff1" text-anchor="start" textLength="58.60" lengthAdjust="spacingAndGlyphs" >Break/Rest</text>
<rect x="1240.00" y="119.00" width="278.00" height="1.00" rx="0" fill="#66757c" />
<text x="1248.20" y="147.10" font-size="17.5" font-weight="bold" fill="#fff" text-anchor="start" textLength="37.00" lengthAdjust="spacingAndGlyphs" >2025</text>
<text x="1248.20" y="173.80" font-size="12.5" font-weight="bold" fill="#fff" text-anchor="start" >Dec</text>
<text x="1266.00" y="196.90" font-size="11" font-weight="normal" fill="#8d979b" text-anchor="middle" >Mo</text>
<text x="1303.60" y="196.90" font-size="11" font-weight="normal" fill="#8d979b" text-anchor="middle" >Tu</text>
<text x="1341.20" y="196.90" font-size="11" font-weight="normal" fill="#8d979b" text-anchor="middle" >We</text>
<text x="1378.80" y="196.90" font-size="11" font-weight="normal" fill="#8d979b" text-anchor="middle" >Th</text>
<text x="1416.40" y="196.90" font-size="11" font-weight="normal" fill="#8d979b" text-anchor="middle" >Fr</text>
<text x="1454.00" y="196.90" font-size="11" font-weight="normal" fill="#8d979b" text-anchor="middle" >Sa</text>
<text x="1491.60" y="196.90" font-size="11" font-weight="normal" fill="#8d979b" text-anchor="middle" >Su</text>
<rect x="1248.20" y="206.20" width="35.60" height="35.30" rx="4" fill="#3f4e55" />
<text x="1266.00" y="224.60" font-size="12" font-weight="normal" fill="#eceff1" text-anchor="middle" stroke="#eceff1" stroke-width="0.25">1</text>
<rect x="1252.10" y="227.00" width="27.80" height="4.00" rx="1.2" fill="#787878" />
<rect x="1258.77" y="227.00" width="1.11" height="4.00" rx="0" fill="#03a9f4" />
<rect x="1259.88" y="227.00" width="3.34" height="4.00" rx="0" fill="#ff6e40" />
<rect x="1263.78" y="227.00" width="5.28" height="4.00" rx="0" fill="#ff6e40" />
<rect x="1269.06" y="227.00" width="0.83" height="4.00" rx="0" fill="#03a9f4" />
<rect x="1285.80" y="206.20" width="35.60" height="35.30" rx="4" fill="#3f4e55" />
<text x="1303.60" y="224.60" font-size="12" font-weight="normal" fill="#eceff1" text-anchor="middle" stroke="#eceff1" stroke-width="0.25">2</text>
<rect x="1289.70" y="227.00" width="27.80" height="4.00" rx="1.2" fill="#787878" />
<rect x="1296.09" y="227.00" width="0.83" height="4.00" rx="0" fill="#03a9f4" />
<rect x="1296.93" y="227.00" width="4.45" height="4.00" rx="0" fill="#ff6e40" />
<rect x="1301.93" y="227.00" width="4.17" height="4.00" rx="0" fill="#ff6e40" />
<rect x="1306.10" y="227.00" width="0.83" height="4.00" rx="0" fill="#03a9f4" />
<rect x="1323.40" y="206.20" width="35.60" height="35.30" rx="4" fill="#3f4e55" />
<text x="1341.20" y="224.60" font-size="12" font-weight="normal" fill="#eceff1" text-anchor="middle" stroke="#eceff1" stroke-width="0.25">3</text>
<rect x="1327.30" y="227.00" width="27.80" height="4.00" rx="1.2" fill="#787878" />
<rect x="1332.86" y="227.00" width="0.83" height="4.00" rx="0" fill="#03a9f4" />
<rect x="1333.69" y="227.00" width="4.45" height="4.00" rx="0" fill="#ff6e40" />
<rect x="1338.98" y="227.00" width="3.34" height="4.00" rx="0" fill="#ff6e40" />
<rect x="1342.31" y="227.00" width="0.83" height="4.00" rx="0" fill="#03a9f4" />
<rect x="1361.00" y="206.20" width="35.60" height="35.30" rx="4" fill="#3f4e55" />
<text x="1378.80" y="224.60" font-size="12" font-weight="normal" fill="#eceff1" text-anchor="middle" stroke="#eceff1" stroke-width="0.25">4</text>
<rect x="1364.90" y="227.00" width="27.80" height="4.00" rx="1.2" fill="#787878" />
<rect x="1369.90" y="227.00" width="0.83" height="4.00" rx="0" fill="#03a9f4" />
<rect x="1370.74" y="227.00" width="6.39" height="4.00" rx="0" fill="#ff6e40" />
<rect x="1377.97" y="227.00" width="2.78" height="4.00" rx="0" fill="#ff6e40" />
<rect x="1381.58" y="227.00" width="3.06" height="4.00" rx="0" fill="#ff6e40" />
<rect x="1384.64" y="227.00" width="0.83" height="4.00" rx="0" fill="#03a9f4" />
<rect x="1398.60" y="206.20" width="35.60" height="35.30" rx="4" fill="#3f4e55" />
<text x="1416.40" y="224.60" font-size="12" font-weight="normal" fill="#eceff1" text-anchor="middle" stroke="#eceff1" stroke-width="0.25">5</text>
<rect x="1402.50" y="227.00" width="27.80" height="4.00" rx="1.2" fill="#787878" />
<rect x="1409.17" y="227.00" width="1.11" height="4.00" rx="0" fill="#03a9f4" />
<rect x="1410.28" y="227.00" width="4.17" height="4.00" rx="0" fill="#ff6e40" />
<rect x="1415.57" y="227.00" width="3.34" height="4.00" rx="0" fill="#ff6e40" />
<rect x="1418.90" y="227.00" width="0.83" height="4.00" rx="0" fill="#03a9f4" />
<rect x="1436.20" y="206.20" width="35.60" height="35.30" rx="4" fill="#3f4e55" />
<text x="1454.00" y="224.60" font-size="12" font-weight="normal" fill="#eceff1" text-anchor="middle" stroke="#eceff1" stroke-width="0.25">6</text>
<rect x="1440.10" y="227.00" width="27.80" height="4.00" rx="1.2" fill="#787878" />
<rect x="1447.61" y="227.00" width="0.83" height="4.00" rx="0" fill="#03a9f4" />
<rect x="1448.44" y="227.00" width="2.22" height="4.00" rx="0" fill="#ff6e40" />
<rect x="1450.66" y="227.00" width="0.83" height="4.00" rx="0" fill="#03a9f4" />
<rect x="1473.80" y="206.20" width="35.60" height="35.30" rx="4" fill="#3f4e55" />
<text x="1491.60" y="224.60" font-size="12" font-weight="normal" fill="#eceff1" text-anchor="middle" stroke="#eceff1" stroke-width="0.25">7</text>
<rect x="1477.70" y="227.00" width="27.80" height="4.00" rx="1.2" fill="#787878" />
<rect x="1248.20" y="243.85" width="35.60" height="35.30" rx="4" fill="#3f4e55" />
<text x="1266.00" y="262.25" font-size="12" font-weight="normal" fill="#eceff1" text-anchor="middle" stroke="#eceff1" stroke-width="0.25">8</text>
<rect x="1252.10" y="264.65" width="27.80" height="4.00" rx="1.2" fill="#787878" />
<rect x="1257.10" y="264.65" width="0.83" height="4.00" rx="0" fill="#03a9f4" />
<rect x="1257.94" y="264.65" width="4.45" height="4.00" rx="0" fill="#ff6e40" />
<rect x="1262.94" y="264.65" width="5.00" height="4.00" rx="0" fill="#ff6e40" />
<rect x="1267.95" y="264.65" width="0.83" height="4.00" rx="0" fill="#03a9f4" />
<rect x="1285.80" y="243.85" width="35.60" height="35.30" rx="4" fill="#3f4e55" />
<text x="1303.60" y="262.25" font-size="12" font-weight="normal" fill="#eceff1" text-anchor="middle" stroke="#eceff1" stroke-width="0.25">9</text>
<rect x="1289.70" y="264.65" width="27.80" height="4.00" rx="1.2" fill="#787878" />
<rect x="1295.26" y="264.65" width="0.83" height="4.00" rx="0" fill="#03a9f4" />
<rect x="1296.09" y="264.65" width="3.89" height="4.00" rx="0" fill="#ff6e40" />
<rect x="1300.82" y="264.65" width="3.34" height="4.00" rx="0" fill="#ff6e40" />
<rect x="1304.16" y="264.65" width="0.83" height="4.00" rx="0" fill="#03a9f4" />
<rect x="1323.40" y="243.85" width="35.60" height="35.30" rx="4" fill="#3f4e55" />
<text x="1341.20" y="262.25" font-size="12" font-weight="normal" fill="#eceff1" text-anchor="middle" stroke="#eceff1" stroke-width="0.25">10</text>
<rect x="1327.30" y="264.65" width="27.80" height="4.00" rx="1.2" fill="#787878" />
<rect x="1333.97" y="264.65" width="0.83" height="4.00" rx="0" fill="#03a9f4" />
<rect x="1334.81" y="264.65" width="5.56" height="4.00" rx="0" fill="#ff6e40" />
<rect x="1341.20" y="264.65" width="3.34" height="4.00" rx="0" fill="#ff6e40" />
<rect x="1344.54" y="264.65" width="0.83" height="4.00" rx="0" fill="#03a9f4" />
<rect x="1361.00" y="243.85" width="35.60" height="35.30" rx="4" fill="#3f4e55" />
<text x="1378.80" y="262.25" font-size="12" font-weight="normal" fill="#eceff1" text-anchor="middle" stroke="#eceff1" stroke-width="0.25">11</text>
<rect x="1364.90" y="264.65" width="27.80" height="4.00" rx="1.2" fill="#787878" />
<rect x="1371.02" y="264.65" width="0.83" height="4.00" rx="0" fill="#03a9f4" />
<rect x="1371.85" y="264.65" width="4.45" height="4.00" rx="0" fill="#ff6e40" />
<rect x="1377.13" y="264.65" width="3.89" height="4.00" rx="0" fill="#ff6e40" />
<rect x="1381.02" y="264.65" width="0.83" height="4.00" rx="0" fill="#03a9f4" />
<rect x="1398.60" y="243.85" width="35.60" height="35.30" rx="4" fill="#3f4e55" />
<text x="1416.40" y="262.25" font-size="12" font-weight="normal" fill="#eceff1" text-anchor="middle" stroke="#eceff1" stroke-width="0.25">12</text>
<rect x="1402.50" y="264.65" width="27.80" height="4.00" rx="1.2" fill="#787878" />
<rect x="1409.17" y="264.65" width="0.83" height="4.00" rx="0" fill="#03a9f4" />
<rect x="1410.01" y="264.65" width="4.45" height="4.00" rx="0" fill="#ff6e40" />
<rect x="1415.01" y="264.65" width="3.89" height="4.00" rx="0" fill="#ff6e40" />
<rect x="1418.90" y="264.65" width="0.83" height="4.00" rx="0" fill="#03a9f4" />
<rect x="1436.20" y="243.85" width="35.60" height="35.30" rx="4" fill="#3f4e55" />
<text x="1454.00" y="262.25" font-size="12" font-weight="normal" fill="#eceff1" text-anchor="middle" stroke="#eceff1" stroke-width="0.25">13</text>
<rect x="1440.10" y="264.65" width="27.80" height="4.00" rx="1.2" fill="#787878" />
<rect x="1473.80" y="243.85" width="35.60" height="35.30" rx="4" fill="#3f4e55" />
<text x="1491.60" y="262.25" font-size="12" font-weight="normal" fill="#eceff1" text-anchor="middle" stroke="#eceff1" stroke-width="0.25">14</text>
<rect x="1477.70" y="264.65" width="27.80" height="4.00" rx="1.2" fill="#787878" />
<rect x="1248.20" y="281.50" width="35.60" height="35.30" rx="4" fill="#3f4e55" />
<text x="1266.00" y="299.90" font-size="12" font-weight="normal" fill="#eceff1" text-anchor="middle" stroke="#eceff1" stroke-width="0.25">15</text>
<rect x="1252.10" y="302.30" width="27.80" height="4.00" rx="1.2" fill="#787878" />
<rect x="1258.77" y="302.30" width="0.83" height="4.00" rx="0" fill="#03a9f4" />
<rect x="1259.61" y="302.30" width="4.17" height="4.00" rx="0" fill="#ff6e40" />
<rect x="1264.61" y="302.30" width="3.89" height="4.00" rx="0" fill="#ff6e40" />
<rect x="1268.50" y="302.30" width="0.83" height="4.00" rx="0" fill="#03a9f4" />
<rect x="1285.80" y="281.50" width="35.60" height="35.30" rx="4" fill="#3f4e55" />
<text x="1303.60" y="299.90" font-size="12" font-weight="normal" fill="#eceff1" text-anchor="middle" stroke="#eceff1" stroke-width="0.25">16</text>
<rect x="1289.70" y="302.30" width="27.80" height="4.00" rx="1.2" fill="#787878" />
<rect x="1294.43" y="302.30" width="0.83" height="4.00" rx="0" fill="#03a9f4" />
<rect x="1295.26" y="302.30" width="5.00" height="4.00" rx="0" fill="#ff6e40" />
<rect x="1301.10" y="302.30" width="3.89" height="4.00" rx="0" fill="#ff6e40" />
<rect x="1304.99" y="302.30" width="0.83" height="4.00" rx="0" fill="#03a9f4" />
<rect x="1306.38" y="302.30" width="5.56" height="4.00" rx="0" fill="#ff6e40" />
<rect x="1311.94" y="302.30" width="0.83" height="4.00" rx="0" fill="#03a9f4" />
<rect x="1313.33" y="302.30" width="1.95" height="4.00" rx="0" fill="#ff6e40" />
<rect x="1315.28" y="302.30" width="0.83" height="4.00" rx="0" fill="#03a9f4" />
<rect x="1323.40" y="281.50" width="35.60" height="35.30" rx="4" fill="#3f4e55" />
<text x="1341.20" y="299.90" font-size="12" font-weight="normal" fill="#eceff1" text-anchor="middle" stroke="#eceff1" stroke-width="0.25">17</text>
<rect x="1327.30" y="302.30" width="27.80" height="4.00" rx="1.2" fill="#787878" />
<rect x="1333.97" y="302.30" width="0.83" height="4.00" rx="0" fill="#03a9f4" />
<rect x="1334.81" y="302.30" width="4.17" height="4.00" rx="0" fill="#ff6e40" />
<rect x="1339.81" y="302.30" width="3.89" height="4.00" rx="0" fill="#ff6e40" />
<rect x="1343.70" y="302.30" width="0.83" height="4.00" rx="0" fill="#03a9f4" />
<rect x="1361.00" y="281.50" width="35.60" height="35.30" rx="4" fill="#3f4e55" />
<text x="1378.80" y="299.90" font-size="12" font-weight="normal" fill="#eceff1" text-anchor="middle" stroke="#eceff1" stroke-width="0.25">18</text>
<rect x="1364.90" y="302.30" width="27.80" height="4.00" rx="1.2" fill="#787878" />
<rect x="1371.02" y="302.30" width="0.83" height="4.00" rx="0" fill="#03a9f4" />
<rect x="1371.85" y="302.30" width="4.45" height="4.00" rx="0" fill="#ff6e40" />
<rect x="1377.13" y="302.30" width="3.89" height="4.00" rx="0" fill="#ff6e40" />
<rect x="1381.02" y="302.30" width="0.83" height="4.00" rx="0" fill="#03a9f4" />
<rect x="1398.60" y="281.50" width="35.60" height="35.30" rx="4" fill="#3f4e55" />
<text x="1416.40" y="299.90" font-size="12" font-weight="normal" fill="#eceff1" text-anchor="middle" stroke="#eceff1" stroke-width="0.25">19</text>
<rect x="1402.50" y="302.30" width="27.80" height="4.00" rx="1.2" fill="#787878" />
<rect x="1410.01" y="302.30" width="0.83" height="4.00" rx="0" fill="#03a9f4" />
<rect x="1410.84" y="302.30" width="3.89" height="4.00" rx="0" fill="#ff6e40" />
<rect x="1415.57" y="302.30" width="3.34" height="4.00" rx="0" fill="#ff6e40" />
<rect x="1418.90" y="302.30" width="0.83" height="4.00" rx="0" fill="#03a9f4" />
<rect x="1436.20" y="281.50" width="35.60" height="35.30" rx="4" fill="#3f4e55" />
<text x="1454.00" y="299.90" font-size="12" font-weight="normal" fill="#eceff1" text-anchor="middle" stroke="#eceff1" stroke-width="0.25">20</text>
<rect x="1440.10" y="302.30" width="27.80" height="4.00" rx="1.2" fill="#787878" />
<rect x="1473.80" y="281.50" width="35.60" height="35.30" rx="4" fill="#3f4e55" />
<text x="1491.60" y="299.90" font-size="12" font-weight="normal" fill="#eceff1" text-anchor="middle" stroke="#eceff1" stroke-width="0.25">21</text>
<rect x="1477.70" y="302.30" width="27.80" height="4.00" rx="1.2" fill="#787878" />
<rect x="1248.20" y="319.15" width="35.60" height="35.30" rx="4" fill="#3f4e55" />
<text x="1266.00" y="337.55" font-size="12" font-weight="normal" fill="#eceff1" text-anchor="middle" stroke="#eceff1" stroke-width="0.25">22</text>
<rect x="1252.10" y="339.95" width="27.80" height="4.00" rx="1.2" fill="#787878" />
<rect x="1285.80" y="319.15" width="35.60" height="35.30" rx="4" fill="#3f4e55" />
<text x="1303.60" y="337.55" font-size="12" font-weight="normal" fill="#eceff1" text-anchor="middle" stroke="#eceff1" stroke-width="0.25">23</text>
<rect x="1289.70" y="339.95" width="27.80" height="4.00" rx="1.2" fill="#787878" />
<rect x="1302.77" y="339.95" width="0.83" height="4.00" rx="0" fill="#03a9f4" />
<rect x="1303.60" y="339.95" width="0.83" height="4.00" rx="0" fill="#ff6e40" />
<rect x="1323.40" y="319.15" width="35.60" height="35.30" rx="4" fill="#3f4e55" />
<text x="1341.20" y="337.55" font-size="12" font-weight="normal" fill="#eceff1" text-anchor="middle" stroke="#eceff1" stroke-width="0.25">24</text>
<rect x="1327.30" y="339.95" width="27.80" height="4.00" rx="1.2" fill="#787878" />
<rect x="1361.00" y="319.15" width="35.60" height="35.30" rx="4" fill="#3f4e55" />
<text x="1378.80" y="337.55" font-size="12" font-weight="normal" fill="#eceff1" text-anchor="middle" stroke="#eceff1" stroke-width="0.25">25</text>
<rect x="1364.90" y="339.95" width="27.80" height="4.00" rx="1.2" fill="#787878" />
<rect x="1398.60" y="319.15" width="35.60" height="35.30" rx="4" fill="#3f4e55" />
<text x="1416.40" y="337.55" font-size="12" font-weight="normal" fill="#eceff1" text-anchor="middle" stroke="#eceff1" stroke-width="0.25">26</text>
<rect x="1402.50" y="339.95" width="27.80" height="4.00" rx="1.2" fill="#787878" />
<rect x="1436.20" y="319.15" width="35.60" height="35.30" rx="4" fill="#3f4e55" />
<text x="1454.00" y="337.55" font-size="12" font-weight="normal" fill="#eceff1" text-anchor="middle" stroke="#eceff1" stroke-width="0.25">27</text>
<rect x="1440.10" y="339.95" width="27.80" height="4.00" rx="1.2" fill="#787878" />
<rect x="1452.61" y="339.95" width="1.11" height="4.00" rx="0" fill="#03a9f4" />
<rect x="1453.72" y="339.95" width="1.11" height="4.00" rx="0" fill="#ff6e40" />
<rect x="1473.80" y="319.15" width="35.60" height="35.30" rx="4" fill="#3f4e55" />
<text x="1491.60" y="337.55" font-size="12" font-weight="normal" fill="#eceff1" text-anchor="middle" stroke="#eceff1" stroke-width="0.25">28</text>
<rect x="1477.70" y="339.95" width="27.80" height="4.00" rx="1.2" fill="#787878" />
<rect x="1248.20" y="356.80" width="35.60" height="35.30" rx="4" fill="#3f4e55" />
<text x="1266.00" y="375.20" font-size="12" font-weight="normal" fill="#eceff1" text-anchor="middle" stroke="#eceff1" stroke-width="0.25">29</text>
<rect x="1252.10" y="377.60" width="27.80" height="4.00" rx="1.2" fill="#787878" />
<rect x="1285.80" y="356.80" width="35.60" height="35.30" rx="4" fill="#3f4e55" />
<text x="1303.60" y="375.20" font-size="12" font-weight="normal" fill="#eceff1" text-anchor="middle" stroke="#eceff1" stroke-width="0.25">30</text>
<rect x="1289.70" y="377.60" width="27.80" height="4.00" rx="1.2" fill="#787878" />
<rect x="1323.40" y="356.80" width="35.60" height="35.30" rx="4" fill="#3f4e55" />
<text x="1341.20" y="375.20" font-size="12" font-weight="normal" fill="#eceff1" text-anchor="middle" stroke="#eceff1" stroke-width="0.25">31</text>
<rect x="1327.30" y="377.60" width="27.80" height="4.00" rx="1.2" fill="#787878" />
<text x="1248.20" y="431.90" font-size="17.5" font-weight="bold" fill="#fff" text-anchor="start" textLength="37.00" lengthAdjust="spacingAndGlyphs" >2026</text>
<text x="1248.20" y="459.00" font-size="12.5" font-weight="bold" fill="#fff" text-anchor="start" >Jan</text>
<text x="1266.00" y="481.90" font-size="11" font-weight="normal" fill="#8d979b" text-anchor="middle" >Mo</text>
<text x="1303.60" y="481.90" font-size="11" font-weight="normal" fill="#8d979b" text-anchor="middle" >Tu</text>
<text x="1341.20" y="481.90" font-size="11" font-weight="normal" fill="#8d979b" text-anchor="middle" >We</text>
<text x="1378.80" y="481.90" font-size="11" font-weight="normal" fill="#8d979b" text-anchor="middle" >Th</text>
<text x="1416.40" y="481.90" font-size="11" font-weight="normal" fill="#8d979b" text-anchor="middle" >Fr</text>
<text x="1454.00" y="481.90" font-size="11" font-weight="normal" fill="#8d979b" text-anchor="middle" >Sa</text>
<text x="1491.60" y="481.90" font-size="11" font-weight="normal" fill="#8d979b" text-anchor="middle" >Su</text>
<rect x="1361.00" y="491.20" width="35.60" height="35.30" rx="4" fill="#3f4e55" />
<text x="1378.80" y="509.60" font-size="12" font-weight="normal" fill="#eceff1" text-anchor="middle" stroke="#eceff1" stroke-width="0.25">1</text>
<rect x="1364.90" y="512.00" width="27.80" height="4.00" rx="1.2" fill="#787878" />
<rect x="1364.90" y="512.00" width="1.39" height="4.00" rx="0" fill="#03a9f4" />
<rect x="1366.29" y="512.00" width="1.25" height="4.00" rx="0" fill="#ffa000" />
<rect x="1367.54" y="512.00" width="0.97" height="4.00" rx="0" fill="#03a9f4" />
<rect x="1368.51" y="512.00" width="0.97" height="4.00" rx="0" fill="#ff6e40" />
<rect x="1369.49" y="512.00" width="1.39" height="4.00" rx="0" fill="#03a9f4" />
<rect x="1370.88" y="512.00" width="0.97" height="4.00" rx="0" fill="#ff6e40" />
<rect x="1371.85" y="512.00" width="0.97" height="4.00" rx="0" fill="#03a9f4" />
<rect x="1372.82" y="512.00" width="0.97" height="4.00" rx="0" fill="#ff6e40" />
<rect x="1373.80" y="512.00" width="0.97" height="4.00" rx="0" fill="#03a9f4" />
<rect x="1374.77" y="512.00" width="1.25" height="4.00" rx="0" fill="#ffa000" />
<rect x="1376.02" y="512.00" width="1.67" height="4.00" rx="0" fill="#03a9f4" />
<rect x="1377.69" y="512.00" width="0.97" height="4.00" rx="0" fill="#ff6e40" />
<rect x="1378.66" y="512.00" width="1.25" height="4.00" rx="0" fill="#03a9f4" />
<rect x="1379.91" y="512.00" width="0.97" height="4.00" rx="0" fill="#ffa000" />
<rect x="1380.88" y="512.00" width="1.67" height="4.00" rx="0" fill="#03a9f4" />
<rect x="1382.55" y="512.00" width="0.97" height="4.00" rx="0" fill="#ff6e40" />
<rect x="1383.53" y="512.00" width="1.25" height="4.00" rx="0" fill="#03a9f4" />
<rect x="1384.78" y="512.00" width="1.39" height="4.00" rx="0" fill="#ff6e40" />
<rect x="1386.17" y="512.00" width="0.97" height="4.00" rx="0" fill="#03a9f4" />
<rect x="1387.14" y="512.00" width="1.39" height="4.00" rx="0" fill="#ffa000" />
<rect x="1388.53" y="512.00" width="1.25" height="4.00" rx="0" fill="#03a9f4" />
<rect x="1389.78" y="512.00" width="0.97" height="4.00" rx="0" fill="#ffa000" />
<rect x="1390.75" y="512.00" width="1.25" height="4.00" rx="0" fill="#03a9f4" />
<rect x="1392.01" y="512.00" width="0.69" height="4.00" rx="0" fill="#ffa000" />
<rect x="1398.60" y="491.20" width="35.60" height="35.30" rx="4" fill="#3f4e55" />
<text x="1416.40" y="509.60" font-size="12" font-weight="normal" fill="#eceff1" text-anchor="middle" stroke="#eceff1" stroke-width="0.25">2</text>
<rect x="1402.50" y="512.00" width="27.80" height="4.00" rx="1.2" fill="#787878" />
<rect x="1408.06" y="512.00" width="0.97" height="4.00" rx="0" fill="#03a9f4" />
<rect x="1409.03" y="512.00" width="0.97" height="4.00" rx="0" fill="#ff6e40" />
<rect x="1410.01" y="512.00" width="1.67" height="4.00" rx="0" fill="#03a9f4" />
<rect x="1411.67" y="512.00" width="1.67" height="4.00" rx="0" fill="#ff6e40" />
<rect x="1413.34" y="512.00" width="1.67" height="4.00" rx="0" fill="#03a9f4" />
<rect x="1415.01" y="512.00" width="1.39" height="4.00" rx="0" fill="#ff6e40" />
<rect x="1416.40" y="512.00" width="1.25" height="4.00" rx="0" fill="#03a9f4" />
<rect x="1417.65" y="512.00" width="1.25" height="4.00" rx="0" fill="#ffa000" />
<rect x="1418.90" y="512.00" width="1.39" height="4.00" rx="0" fill="#03a9f4" />
<rect x="1420.29" y="512.00" width="1.67" height="4.00" rx="0" fill="#ffa000" />
<rect x="1421.96" y="512.00" width="1.39" height="4.00" rx="0" fill="#03a9f4" />
<rect x="1436.20" y="491.20" width="35.60" height="35.30" rx="4" fill="#3f4e55" />
<text x="1454.00" y="509.60" font-size="12" font-weight="normal" fill="#eceff1" text-anchor="middle" stroke="#eceff1" stroke-width="0.25">3</text>
<rect x="1440.10" y="512.00" width="27.80" height="4.00" rx="1.2" fill="#787878" />
<rect x="1446.22" y="512.00" width="1.39" height="4.00" rx="0" fill="#03a9f4" />
<rect x="1447.61" y="512.00" width="0.97" height="4.00" rx="0" fill="#ffa000" />
<rect x="1448.58" y="512.00" width="1.67" height="4.00" rx="0" fill="#03a9f4" />
<rect x="1450.25" y="512.00" width="1.25" height="4.00" rx="0" fill="#ff6e40" />
<rect x="1451.50" y="512.00" width="1.67" height="4.00" rx="0" fill="#03a9f4" />
<rect x="1453.17" y="512.00" width="1.67" height="4.00" rx="0" fill="#ffa000" />
<rect x="1454.83" y="512.00" width="0.97" height="4.00" rx="0" fill="#03a9f4" />
<rect x="1455.81" y="512.00" width="1.39" height="4.00" rx="0" fill="#ffa000" />
<rect x="1457.20" y="512.00" width="1.39" height="4.00" rx="0" fill="#03a9f4" />
<rect x="1458.59" y="512.00" width="0.97" height="4.00" rx="0" fill="#ff6e40" />
<rect x="1473.80" y="491.20" width="35.60" height="35.30" rx="4" fill="#3f4e55" />
<text x="1491.60" y="509.60" font-size="12" font-weight="normal" fill="#eceff1" text-anchor="middle" stroke="#eceff1" stroke-width="0.25">4</text>
<rect x="1477.70" y="512.00" width="27.80" height="4.00" rx="1.2" fill="#787878" />
<rect x="1248.20" y="528.85" width="35.60" height="35.30" rx="4" fill="#3f4e55" />
<text x="1266.00" y="547.25" font-size="12" font-weight="normal" fill="#eceff1" text-anchor="middle" stroke="#eceff1" stroke-width="0.25">5</text>
<rect x="1252.10" y="549.65" width="27.80" height="4.00" rx="1.2" fill="#787878" />
<rect x="1255.71" y="549.65" width="0.97" height="4.00" rx="0" fill="#03a9f4" />
<rect x="1256.69" y="549.65" width="0.97" height="4.00" rx="0" fill="#ff6e40" />
<rect x="1257.66" y="549.65" width="0.97" height="4.00" rx="0" fill="#03a9f4" />
<rect x="1258.63" y="549.65" width="0.97" height="4.00" rx="0" fill="#ffa000" />
<rect x="1259.61" y="549.65" width="1.67" height="4.00" rx="0" fill="#03a9f4" />
<rect x="1261.27" y="549.65" width="1.39" height="4.00" rx="0" fill="#ffa000" />
<rect x="1262.66" y="549.65" width="1.39" height="4.00" rx="0" fill="#03a9f4" />
<rect x="1264.05" y="549.65" width="0.97" height="4.00" rx="0" fill="#ff6e40" />
<rect x="1265.03" y="549.65" width="1.25" height="4.00" rx="0" fill="#03a9f4" />
<rect x="1266.28" y="549.65" width="0.97" height="4.00" rx="0" fill="#ff6e40" />
<rect x="1267.25" y="549.65" width="1.25" height="4.00" rx="0" fill="#03a9f4" />
<rect x="1268.50" y="549.65" width="1.39" height="4.00" rx="0" fill="#ffa000" />
<rect x="1269.89" y="549.65" width="1.25" height="4.00" rx="0" fill="#03a9f4" />
<rect x="1271.14" y="549.65" width="1.67" height="4.00" rx="0" fill="#ff6e40" />
<rect x="1272.81" y="549.65" width="0.97" height="4.00" rx="0" fill="#03a9f4" />
<rect x="1273.78" y="549.65" width="1.25" height="4.00" rx="0" fill="#ff6e40" />
<rect x="1275.04" y="549.65" width="1.25" height="4.00" rx="0" fill="#03a9f4" />
<rect x="1285.80" y="528.85" width="35.60" height="35.30" rx="4" fill="#3f4e55" />
<text x="1303.60" y="547.25" font-size="12" font-weight="normal" fill="#eceff1" text-anchor="middle" stroke="#eceff1" stroke-width="0.25">6</text>
<rect x="1289.70" y="549.65" width="27.80" height="4.00" rx="1.2" fill="#787878" />
<rect x="1291.09" y="549.65" width="1.25" height="4.00" rx="0" fill="#03a9f4" />
<rect x="1292.34" y="549.65" width="1.67" height="4.00" rx="0" fill="#ff6e40" />
<rect x="1294.01" y="549.65" width="1.67" height="4.00" rx="0" fill="#03a9f4" />
<rect x="1295.68" y="549.65" width="1.39" height="4.00" rx="0" fill="#ff6e40" />
<rect x="1297.07" y="549.65" width="1.25" height="4.00" rx="0" fill="#03a9f4" />
<rect x="1298.32" y="549.65" width="0.97" height="4.00" rx="0" fill="#ff6e40" />
<rect x="1299.29" y="549.65" width="1.25" height="4.00" rx="0" fill="#03a9f4" />
<rect x="1300.54" y="549.65" width="1.25" height="4.00" rx="0" fill="#ff6e40" />
<rect x="1301.79" y="549.65" width="1.25" height="4.00" rx="0" fill="#03a9f4" />
<rect x="1303.04" y="549.65" width="1.39" height="4.00" rx="0" fill="#ff6e40" />
<rect x="1304.43" y="549.65" width="1.25" height="4.00" rx="0" fill="#03a9f4" />
<rect x="1305.68" y="549.65" width="1.67" height="4.00" rx="0" fill="#ff6e40" />
<rect x="1307.35" y="549.65" width="1.39" height="4.00" rx="0" fill="#03a9f4" />
<rect x="1308.74" y="549.65" width="1.25" height="4.00" rx="0" fill="#ffa000" />
<rect x="1309.99" y="549.65" width="0.97" height="4.00" rx="0" fill="#03a9f4" />
<rect x="1310.97" y="549.65" width="1.67" height="4.00" rx="0" fill="#ff6e40" />
<rect x="1312.63" y="549.65" width="1.67" height="4.00" rx="0" fill="#03a9f4" />
<rect x="1314.30" y="549.65" width="1.67" height="4.00" rx="0" fill="#ff6e40" />
<rect x="1315.97" y="549.65" width="0.69" height="4.00" rx="0" fill="#03a9f4" />
<rect x="1323.40" y="528.85" width="35.60" height="35.30" rx="4" fill="#3f4e55" />
<text x="1341.20" y="547.25" font-size="12" font-weight="normal" fill="#eceff1" text-anchor="middle" stroke="#eceff1" stroke-width="0.25">7</text>
<rect x="1327.30" y="549.65" width="27.80" height="4.00" rx="1.2" fill="#787878" />
<rect x="1330.08" y="549.65" width="1.67" height="4.00" rx="0" fill="#03a9f4" />
<rect x="1331.75" y="549.65" width="0.97" height="4.00" rx="0" fill="#ff6e40" />
<rect x="1332.72" y="549.65" width="1.25" height="4.00" rx="0" fill="#03a9f4" />
<rect x="1333.97" y="549.65" width="1.67" height="4.00" rx="0" fill="#ff6e40" />
<rect x="1335.64" y="549.65" width="1.39" height="4.00" rx="0" fill="#03a9f4" />
<rect x="1337.03" y="549.65" width="0.97" height="4.00" rx="0" fill="#ff6e40" />
<rect x="1338.00" y="549.65" width="1.25" height="4.00" rx="0" fill="#03a9f4" />
<rect x="1339.25" y="549.65" width="0.97" height="4.00" rx="0" fill="#ffa000" />
<rect x="1340.23" y="549.65" width="0.97" height="4.00" rx="0" fill="#03a9f4" />
<rect x="1341.20" y="549.65" width="0.97" height="4.00" rx="0" fill="#ffa000" />
<rect x="1342.17" y="549.65" width="1.67" height="4.00" rx="0" fill="#03a9f4" />
<rect x="1343.84" y="549.65" width="1.25" height="4.00" rx="0" fill="#ff6e40" />
<rect x="1345.09" y="549.65" width="1.39" height="4.00" rx="0" fill="#03a9f4" />
<rect x="1346.48" y="549.65" width="1.67" height="4.00" rx="0" fill="#ff6e40" />
<rect x="1348.15" y="549.65" width="1.67" height="4.00" rx="0" fill="#03a9f4" />
<rect x="1349.82" y="549.65" width="1.67" height="4.00" rx="0" fill="#ff6e40" />
<rect x="1351.49" y="549.65" width="0.83" height="4.00" rx="0" fill="#03a9f4" />
<rect x="1361.00" y="528.85" width="35.60" height="35.30" rx="4" fill="#3f4e55" />
<text x="1378.80" y="547.25" font-size="12" font-weight="normal" fill="#eceff1" text-anchor="middle" stroke="#eceff1" stroke-width="0.25">8</text>
<rect x="1364.90" y="549.65" width="27.80" height="4.00" rx="1.2" fill="#787878" />
<rect x="1369.07" y="549.65" width="0.97" height="4.00" rx="0" fill="#03a9f4" />
<rect x="1370.04" y="549.65" width="1.25" height="4.00" rx="0" fill="#ffa000" />
<rect x="1371.29" y="549.65" width="1.39" height="4.00" rx="0" fill="#03a9f4" />
<rect x="1372.68" y="549.65" width="1.39" height="4.00" rx="0" fill="#ffa000" />
<rect x="1374.07" y="549.65" width="1.25" height="4.00" rx="0" fill="#03a9f4" />
<rect x="1375.33" y="549.65" width="0.97" height="4.00" rx="0" fill="#ffa000" />
<rect x="1376.30" y="549.65" width="1.39" height="4.00" rx="0" fill="#03a9f4" />
<rect x="1377.69" y="549.65" width="1.25" height="4.00" rx="0" fill="#ff6e40" />
<rect x="1378.94" y="549.65" width="1.39" height="4.00" rx="0" fill="#03a9f4" />
<rect x="1380.33" y="549.65" width="0.97" height="4.00" rx="0" fill="#ffa000" />
<rect x="1381.30" y="549.65" width="1.39" height="4.00" rx="0" fill="#03a9f4" />
<rect x="1382.69" y="549.65" width="1.25" height="4.00" rx="0" fill="#ff6e40" />
<rect x="1383.94" y="549.65" width="1.39" height="4.00" rx="0" fill="#03a9f4" />
<rect x="1385.33" y="549.65" width="0.42" height="4.00" rx="0" fill="#ff6e40" />
<rect x="1398.60" y="528.85" width="35.60" height="35.30" rx="4" fill="#3f4e55" />
<text x="1416.40" y="547.25" font-size="12" font-weight="normal" fill="#eceff1" text-anchor="middle" stroke="#eceff1" stroke-width="0.25">9</text>
<rect x="1402.50" y="549.65" width="27.80" height="4.00" rx="1.2" fill="#787878" />
<rect x="1402.50" y="549.65" width="1.25" height="4.00" rx="0" fill="#03a9f4" />
<rect x="1403.75" y="549.65" width="1.67" height="4.00" rx="0" fill="#ff6e40" />
<rect x="1405.42" y="549.65" width="1.67" height="4.00" rx="0" fill="#03a9f4" />
<rect x="1407.09" y="549.65" width="1.39" height="4.00" rx="0" fill="#ff6e40" />
<rect x="1408.48" y="549.65" width="1.39" height="4.00" rx="0" fill="#03a9f4" />
<rect x="1409.87" y="549.65" width="1.67" height="4.00" rx="0" fill="#ff6e40" />
<rect x="1411.54" y="549.65" width="1.39" height="4.00" rx="0" fill="#03a9f4" />
<rect x="1412.93" y="549.65" width="1.67" height="4.00" rx="0" fill="#ff6e40" />
<rect x="1414.59" y="549.65" width="0.97" height="4.00" rx="0" fill="#03a9f4" />
<rect x="1415.57" y="549.65" width="1.25" height="4.00" rx="0" fill="#ff6e40" />
<rect x="1416.82" y="549.65" width="1.67" height="4.00" rx="0" fill="#03a9f4" />
<rect x="1418.49" y="549.65" width="1.25" height="4.00" rx="0" fill="#ff6e40" />
<rect x="1419.74" y="549.65" width="1.67" height="4.00" rx="0" fill="#03a9f4" />
<rect x="1421.40" y="549.65" width="0.97" height="4.00" rx="0" fill="#ffa000" />
<rect x="1422.38" y="549.65" width="1.39" height="4.00" rx="0" fill="#03a9f4" />
<rect x="1423.77" y="549.65" width="0.97" height="4.00" rx="0" fill="#ff6e40" />
<rect x="1424.74" y="549.65" width="1.25" height="4.00" rx="0" fill="#03a9f4" />
<rect x="1425.99" y="549.65" width="1.67" height="4.00" rx="0" fill="#ff6e40" />
<rect x="1427.66" y="549.65" width="1.39" height="4.00" rx="0" fill="#03a9f4" />
<rect x="1429.05" y="549.65" width="0.97" height="4.00" rx="0" fill="#ff6e40" />
<rect x="1430.02" y="549.65" width="0.28" height="4.00" rx="0" fill="#03a9f4" />
<rect x="1436.20" y="528.85" width="35.60" height="35.30" rx="4" fill="#3f4e55" />
<text x="1454.00" y="547.25" font-size="12" font-weight="normal" fill="#eceff1" text-anchor="middle" stroke="#eceff1" stroke-width="0.25">10</text>
<rect x="1440.10" y="549.65" width="27.80" height="4.00" rx="1.2" fill="#787878" />
<rect x="1445.66" y="549.65" width="0.97" height="4.00" rx="0" fill="#03a9f4" />
<rect x="1446.63" y="549.65" width="1.25" height="4.00" rx="0" fill="#ff6e40" />
<rect x="1447.88" y="549.65" width="0.97" height="4.00" rx="0" fill="#03a9f4" />
<rect x="1448.86" y="549.65" width="1.25" height="4.00" rx="0" fill="#ff6e40" />
<rect x="1450.11" y="549.65" width="1.25" height="4.00" rx="0" fill="#03a9f4" />
<rect x="1451.36" y="549.65" width="1.67" height="4.00" rx="0" fill="#ff6e40" />
<rect x="1453.03" y="549.65" width="0.97" height="4.00" rx="0" fill="#03a9f4" />
<rect x="1473.80" y="528.85" width="35.60" height="35.30" rx="4" fill="#3f4e55" />
<text x="1491.60" y="547.25" font-size="12" font-weight="normal" fill="#eceff1" text-anchor="middle" stroke="#eceff1" stroke-width="0.25">11</text>
<rect x="1477.70" y="549.65" width="27.80" height="4.00" rx="1.2" fill="#787878" />
<rect x="1248.20" y="566.50" width="35.60" height="35.30" rx="4" fill="#3f4e55" />
<text x="1266.00" y="584.90" font-size="12" font-weight="normal" fill="#eceff1" text-anchor="middle" stroke="#eceff1" stroke-width="0.25">12</text>
<rect x="1252.10" y="587.30" width="27.80" height="4.00" rx="1.2" fill="#787878" />
<rect x="1252.10" y="587.30" width="0.97" height="4.00" rx="0" fill="#03a9f4" />
<rect x="1253.07" y="587.30" width="0.97" height="4.00" rx="0" fill="#ffa000" />
<rect x="1254.05" y="587.30" width="1.25" height="4.00" rx="0" fill="#03a9f4" />
<rect x="1255.30" y="587.30" width="1.67" height="4.00" rx="0" fill="#ff6e40" />
<rect x="1256.97" y="587.30" width="0.97" height="4.00" rx="0" fill="#03a9f4" />
<rect x="1257.94" y="587.30" width="1.39" height="4.00" rx="0" fill="#ff6e40" />
<rect x="1259.33" y="587.30" width="1.25" height="4.00" rx="0" fill="#03a9f4" />
<rect x="1260.58" y="587.30" width="1.39" height="4.00" rx="0" fill="#ffa000" />
<rect x="1261.97" y="587.30" width="1.67" height="4.00" rx="0" fill="#03a9f4" />
<rect x="1263.64" y="587.30" width="1.25" height="4.00" rx="0" fill="#ffa000" />
<rect x="1264.89" y="587.30" width="1.39" height="4.00" rx="0" fill="#03a9f4" />
<rect x="1266.28" y="587.30" width="1.67" height="4.00" rx="0" fill="#ffa000" />
<rect x="1267.95" y="587.30" width="1.67" height="4.00" rx="0" fill="#03a9f4" />
<rect x="1269.61" y="587.30" width="1.25" height="4.00" rx="0" fill="#ff6e40" />
<rect x="1270.87" y="587.30" width="0.97" height="4.00" rx="0" fill="#03a9f4" />
<rect x="1271.84" y="587.30" width="1.67" height="4.00" rx="0" fill="#ffa000" />
<rect x="1273.51" y="587.30" width="0.97" height="4.00" rx="0" fill="#03a9f4" />
<rect x="1274.48" y="587.30" width="1.25" height="4.00" rx="0" fill="#ff6e40" />
<rect x="1275.73" y="587.30" width="1.67" height="4.00" rx="0" fill="#03a9f4" />
<rect x="1277.40" y="587.30" width="0.97" height="4.00" rx="0" fill="#ff6e40" />
<rect x="1278.37" y="587.30" width="1.39" height="4.00" rx="0" fill="#03a9f4" />
<rect x="1279.76" y="587.30" width="0.14" height="4.00" rx="0" fill="#ffa000" />
<rect x="1285.80" y="566.50" width="35.60" height="35.30" rx="4" fill="#3f4e55" />
<text x="1303.60" y="584.90" font-size="12" font-weight="normal" fill="#eceff1" text-anchor="middle" stroke="#eceff1" stroke-width="0.25">13</text>
<rect x="1289.70" y="587.30" width="27.80" height="4.00" rx="1.2" fill="#787878" />
<rect x="1289.70" y="587.30" width="0.97" height="4.00" rx="0" fill="#03a9f4" />
<rect x="1290.67" y="587.30" width="1.25" height="4.00" rx="0" fill="#ff6e40" />
<rect x="1291.92" y="587.30" width="0.97" height="4.00" rx="0" fill="#03a9f4" />
<rect x="1292.90" y="587.30" width="0.97" height="4.00" rx="0" fill="#ff6e40" />
<rect x="1293.87" y="587.30" width="0.97" height="4.00" rx="0" fill="#03a9f4" />
<rect x="1294.84" y="587.30" width="0.97" height="4.00" rx="0" fill="#ff6e40" />
<rect x="1295.82" y="587.30" width="1.25" height="4.00" rx="0" fill="#03a9f4" />
<rect x="1297.07" y="587.30" width="1.39" height="4.00" rx="0" fill="#ffa000" />
<rect x="1298.46" y="587.30" width="1.67" height="4.00" rx="0" fill="#03a9f4" />
<rect x="1300.12" y="587.30" width="1.25" height="4.00" rx="0" fill="#ff6e40" />
<rect x="1301.38" y="587.30" width="1.25" height="4.00" rx="0" fill="#03a9f4" />
<rect x="1302.63" y="587.30" width="1.67" height="4.00" rx="0" fill="#ff6e40" />
<rect x="1304.30" y="587.30" width="0.97" height="4.00" rx="0" fill="#03a9f4" />
<rect x="1305.27" y="587.30" width="1.67" height="4.00" rx="0" fill="#ff6e40" />
<rect x="1306.94" y="587.30" width="0.97" height="4.00" rx="0" fill="#03a9f4" />
<rect x="1307.91" y="587.30" width="1.25" height="4.00" rx="0" fill="#ff6e40" />
<rect x="1309.16" y="587.30" width="1.25" height="4.00" rx="0" fill="#03a9f4" />
<rect x="1310.41" y="587.30" width="1.39" height="4.00" rx="0" fill="#ff6e40" />
<rect x="1311.80" y="587.30" width="1.39" height="4.00" rx="0" fill="#03a9f4" />
<rect x="1313.19" y="587.30" width="1.25" height="4.00" rx="0" fill="#ff6e40" />
<rect x="1314.44" y="587.30" width="1.67" height="4.00" rx="0" fill="#03a9f4" />
<rect x="1316.11" y="587.30" width="1.25" height="4.00" rx="0" fill="#ff6e40" />
<rect x="1317.36" y="587.30" width="0.14" height="4.00" rx="0" fill="#03a9f4" />
<rect x="1323.40" y="566.50" width="35.60" height="35.30" rx="4" fill="#3f4e55" />
<text x="1341.20" y="584.90" font-size="12" font-weight="normal" fill="#eceff1" text-anchor="middle" stroke="#eceff1" stroke-width="0.25">14</text>
<rect x="1327.30" y="587.30" width="27.80" height="4.00" rx="1.2" fill="#787878" />
<rect x="1331.47" y="587.30" width="1.25" height="4.00" rx="0" fill="#03a9f4" />
<rect x="1332.72" y="587.30" width="1.25" height="4.00" rx="0" fill="#ffa000" />
<rect x="1333.97" y="587.30" width="1.67" height="4.00" rx="0" fill="#03a9f4" />
<rect x="1335.64" y="587.30" width="1.67" height="4.00" rx="0" fill="#ff6e40" />
<rect x="1337.31" y="587.30" width="1.25" height="4.00" rx="0" fill="#03a9f4" />
<rect x="1338.56" y="587.30" width="1.39" height="4.00" rx="0" fill="#ff6e40" />
<rect x="1339.95" y="587.30" width="1.39" height="4.00" rx="0" fill="#03a9f4" />
<rect x="1341.34" y="587.30" width="0.97" height="4.00" rx="0" fill="#ffa000" />
<rect x="1342.31" y="587.30" width="1.67" height="4.00" rx="0" fill="#03a9f4" />
<rect x="1343.98" y="587.30" width="1.67" height="4.00" rx="0" fill="#ff6e40" />
<rect x="1345.65" y="587.30" width="1.39" height="4.00" rx="0" fill="#03a9f4" />
<rect x="1347.04" y="587.30" width="1.39" height="4.00" rx="0" fill="#ff6e40" />
<rect x="1348.43" y="587.30" width="0.97" height="4.00" rx="0" fill="#03a9f4" />
<rect x="1349.40" y="587.30" width="1.25" height="4.00" rx="0" fill="#ff6e40" />
<rect x="1350.65" y="587.30" width="0.28" height="4.00" rx="0" fill="#03a9f4" />
<rect x="1361.00" y="566.50" width="35.60" height="35.30" rx="4" fill="#3f4e55" />
<text x="1378.80" y="584.90" font-size="12" font-weight="normal" fill="#eceff1" text-anchor="middle" stroke="#eceff1" stroke-width="0.25">15</text>
<rect x="1364.90" y="587.30" width="27.80" height="4.00" rx="1.2" fill="#787878" />
<rect x="1369.07" y="587.30" width="1.39" height="4.00" rx="0" fill="#03a9f4" />
<rect x="1370.46" y="587.30" width="0.97" height="4.00" rx="0" fill="#ff6e40" />
<rect x="1371.43" y="587.30" width="1.25" height="4.00" rx="0" fill="#03a9f4" />
<rect x="1372.68" y="587.30" width="1.67" height="4.00" rx="0" fill="#ff6e40" />
<rect x="1374.35" y="587.30" width="1.25" height="4.00" rx="0" fill="#03a9f4" />
<rect x="1375.60" y="587.30" width="1.67" height="4.00" rx="0" fill="#ff6e40" />
<rect x="1377.27" y="587.30" width="1.39" height="4.00" rx="0" fill="#03a9f4" />
<rect x="1378.66" y="587.30" width="0.97" height="4.00" rx="0" fill="#ff6e40" />
<rect x="1379.63" y="587.30" width="0.97" height="4.00" rx="0" fill="#03a9f4" />
<rect x="1380.61" y="587.30" width="1.39" height="4.00" rx="0" fill="#ffa000" />
<rect x="1382.00" y="587.30" width="0.97" height="4.00" rx="0" fill="#03a9f4" />
<rect x="1382.97" y="587.30" width="1.39" height="4.00" rx="0" fill="#ffa000" />
<rect x="1384.36" y="587.30" width="1.25" height="4.00" rx="0" fill="#03a9f4" />
<rect x="1385.61" y="587.30" width="0.97" height="4.00" rx="0" fill="#ff6e40" />
<rect x="1386.58" y="587.30" width="0.56" height="4.00" rx="0" fill="#03a9f4" />
<rect x="1398.60" y="566.50" width="35.60" height="35.30" rx="4" fill="#3f4e55" />
<text x="1416.40" y="584.90" font-size="12" font-weight="normal" fill="#eceff1" text-anchor="middle" stroke="#eceff1" stroke-width="0.25">16</text>
<rect x="1402.50" y="587.30" width="27.80" height="4.00" rx="1.2" fill="#787878" />
<rect x="1402.50" y="587.30" width="0.97" height="4.00" rx="0" fill="#03a9f4" />
<rect x="1403.47" y="587.30" width="1.39" height="4.00" rx="0" fill="#ff6e40" />
<rect x="1404.86" y="587.30" width="1.39" height="4.00" rx="0" fill="#03a9f4" />
<rect x="1406.25" y="587.30" width="1.25" height="4.00" rx="0" fill="#ffa000" />
<rect x="1407.50" y="587.30" width="1.25" height="4.00" rx="0" fill="#03a9f4" />
<rect x="1408.76" y="587.30" width="0.97" height="4.00" rx="0" fill="#ff6e40" />
<rect x="1409.73" y="587.30" width="0.97" height="4.00" rx="0" fill="#03a9f4" />
<rect x="1410.70" y="587.30" width="1.25" height="4.00" rx="0" fill="#ff6e40" />
<rect x="1411.95" y="587.30" width="1.39" height="4.00" rx="0" fill="#03a9f4" />
<rect x="1413.34" y="587.30" width="1.25" height="4.00" rx="0" fill="#ff6e40" />
<rect x="1414.59" y="587.30" width="1.25" height="4.00" rx="0" fill="#03a9f4" />
<rect x="1415.84" y="587.30" width="1.39" height="4.00" rx="0" fill="#ff6e40" />
<rect x="1417.23" y="587.30" width="1.39" height="4.00" rx="0" fill="#03a9f4" />
<rect x="1418.62" y="587.30" width="0.97" height="4.00" rx="0" fill="#ff6e40" />
<rect x="1419.60" y="587.30" width="1.25" height="4.00" rx="0" fill="#03a9f4" />
<rect x="1420.85" y="587.30" width="1.67" height="4.00" rx="0" fill="#ff6e40" />
<rect x="1422.52" y="587.30" width="0.97" height="4.00" rx="0" fill="#03a9f4" />
<rect x="1423.49" y="587.30" width="1.67" height="4.00" rx="0" fill="#ffa000" />
<rect x="1425.16" y="587.30" width="1.67" height="4.00" rx="0" fill="#03a9f4" />
<rect x="1426.83" y="587.30" width="1.39" height="4.00" rx="0" fill="#ff6e40" />
<rect x="1428.22" y="587.30" width="1.39" height="4.00" rx="0" fill="#03a9f4" />
<rect x="1429.61" y="587.30" width="0.69" height="4.00" rx="0" fill="#ff6e40" />
<rect x="1436.20" y="566.50" width="35.60" height="35.30" rx="4" fill="#3f4e55" />
<text x="1454.00" y="584.90" font-size="12" font-weight="normal" fill="#eceff1" text-anchor="middle" stroke="#eceff1" stroke-width="0.25">17</text>
<rect x="1440.10" y="587.30" width="27.80" height="4.00" rx="1.2" fill="#787878" />
<rect x="1473.80" y="566.50" width="35.60" height="35.30" rx="4" fill="#3f4e55" />
<text x="1491.60" y="584.90" font-size="12" font-weight="normal" fill="#eceff1" text-anchor="middle" stroke="#eceff1" stroke-width="0.25">18</text>
<rect x="1477.70" y="587.30" width="27.80" height="4.00" rx="1.2" fill="#787878" />
<rect x="1248.20" y="604.15" width="35.60" height="35.30" rx="4" fill="#3f4e55" />
<text x="1266.00" y="622.55" font-size="12" font-weight="normal" fill="#eceff1" text-anchor="middle" stroke="#eceff1" stroke-width="0.25">19</text>
<rect x="1252.10" y="624.95" width="27.80" height="4.00" rx="1.2" fill="#787878" />
<rect x="1254.88" y="624.95" width="1.39" height="4.00" rx="0" fill="#03a9f4" />
<rect x="1256.27" y="624.95" width="0.97" height="4.00" rx="0" fill="#ff6e40" />
<rect x="1257.24" y="624.95" width="0.97" height="4.00" rx="0" fill="#03a9f4" />
<rect x="1258.22" y="624.95" width="1.39" height="4.00" rx="0" fill="#ff6e40" />
<rect x="1259.61" y="624.95" width="0.97" height="4.00" rx="0" fill="#03a9f4" />
<rect x="1260.58" y="624.95" width="0.97" height="4.00" rx="0" fill="#ffa000" />
<rect x="1261.55" y="624.95" width="1.39" height="4.00" rx="0" fill="#03a9f4" />
<rect x="1262.94" y="624.95" width="1.25" height="4.00" rx="0" fill="#ff6e40" />
<rect x="1264.19" y="624.95" width="1.67" height="4.00" rx="0" fill="#03a9f4" />
<rect x="1265.86" y="624.95" width="1.25" height="4.00" rx="0" fill="#ff6e40" />
<rect x="1267.11" y="624.95" width="1.67" height="4.00" rx="0" fill="#03a9f4" />
<rect x="1268.78" y="624.95" width="0.97" height="4.00" rx="0" fill="#ff6e40" />
<rect x="1269.75" y="624.95" width="1.39" height="4.00" rx="0" fill="#03a9f4" />
<rect x="1271.14" y="624.95" width="1.39" height="4.00" rx="0" fill="#ff6e40" />
<rect x="1272.53" y="624.95" width="1.39" height="4.00" rx="0" fill="#03a9f4" />
<rect x="1273.92" y="624.95" width="1.25" height="4.00" rx="0" fill="#ff6e40" />
<rect x="1275.17" y="624.95" width="0.97" height="4.00" rx="0" fill="#03a9f4" />
<rect x="1276.15" y="624.95" width="0.97" height="4.00" rx="0" fill="#ff6e40" />
<rect x="1285.80" y="604.15" width="35.60" height="35.30" rx="4" fill="#3f4e55" />
<text x="1303.60" y="622.55" font-size="12" font-weight="normal" fill="#eceff1" text-anchor="middle" stroke="#eceff1" stroke-width="0.25">20</text>
<rect x="1289.70" y="624.95" width="27.80" height="4.00" rx="1.2" fill="#787878" />
<rect x="1293.87" y="624.95" width="1.67" height="4.00" rx="0" fill="#03a9f4" />
<rect x="1295.54" y="624.95" width="1.39" height="4.00" rx="0" fill="#ffa000" />
<rect x="1296.93" y="624.95" width="1.25" height="4.00" rx="0" fill="#03a9f4" />
<rect x="1298.18" y="624.95" width="1.25" height="4.00" rx="0" fill="#ff6e40" />
<rect x="1299.43" y="624.95" width="0.97" height="4.00" rx="0" fill="#03a9f4" />
<rect x="1300.40" y="624.95" width="1.39" height="4.00" rx="0" fill="#ff6e40" />
<rect x="1301.79" y="624.95" width="1.67" height="4.00" rx="0" fill="#03a9f4" />
<rect x="1303.46" y="624.95" width="0.97" height="4.00" rx="0" fill="#ff6e40" />
<rect x="1304.43" y="624.95" width="1.39" height="4.00" rx="0" fill="#03a9f4" />
<rect x="1305.82" y="624.95" width="1.39" height="4.00" rx="0" fill="#ff6e40" />
<rect x="1307.21" y="624.95" width="1.25" height="4.00" rx="0" fill="#03a9f4" />
<rect x="1308.47" y="624.95" width="1.67" height="4.00" rx="0" fill="#ffa000" />
<rect x="1310.13" y="624.95" width="1.67" height="4.00" rx="0" fill="#03a9f4" />
<rect x="1311.80" y="624.95" width="1.25" height="4.00" rx="0" fill="#ffa000" />
<rect x="1313.05" y="624.95" width="0.28" height="4.00" rx="0" fill="#03a9f4" />
<rect x="1323.40" y="604.15" width="35.60" height="35.30" rx="4" fill="#3f4e55" />
<text x="1341.20" y="622.55" font-size="12" font-weight="normal" fill="#eceff1" text-anchor="middle" stroke="#eceff1" stroke-width="0.25">21</text>
<rect x="1327.30" y="624.95" width="27.80" height="4.00" rx="1.2" fill="#787878" />
<rect x="1327.30" y="624.95" width="0.97" height="4.00" rx="0" fill="#03a9f4" />
<rect x="1328.27" y="624.95" width="1.67" height="4.00" rx="0" fill="#ff6e40" />
<rect x="1329.94" y="624.95" width="0.97" height="4.00" rx="0" fill="#03a9f4" />
<rect x="1330.91" y="624.95" width="1.25" height="4.00" rx="0" fill="#ff6e40" />
<rect x="1332.17" y="624.95" width="0.97" height="4.00" rx="0" fill="#03a9f4" />
<rect x="1333.14" y="624.95" width="1.25" height="4.00" rx="0" fill="#ff6e40" />
<rect x="1334.39" y="624.95" width="1.67" height="4.00" rx="0" fill="#03a9f4" />
<rect x="1336.06" y="624.95" width="1.67" height="4.00" rx="0" fill="#ff6e40" />
<rect x="1337.73" y="624.95" width="0.97" height="4.00" rx="0" fill="#03a9f4" />
<rect x="1338.70" y="624.95" width="1.25" height="4.00" rx="0" fill="#ff6e40" />
<rect x="1339.95" y="624.95" width="0.97" height="4.00" rx="0" fill="#03a9f4" />
<rect x="1340.92" y="624.95" width="1.67" height="4.00" rx="0" fill="#ffa000" />
<rect x="1342.59" y="624.95" width="0.97" height="4.00" rx="0" fill="#03a9f4" />
<rect x="1343.56" y="624.95" width="0.97" height="4.00" rx="0" fill="#ff6e40" />
<rect x="1344.54" y="624.95" width="0.97" height="4.00" rx="0" fill="#03a9f4" />
<rect x="1345.51" y="624.95" width="1.39" height="4.00" rx="0" fill="#ffa000" />
<rect x="1346.90" y="624.95" width="1.25" height="4.00" rx="0" fill="#03a9f4" />
<rect x="1348.15" y="624.95" width="1.25" height="4.00" rx="0" fill="#ff6e40" />
<rect x="1349.40" y="624.95" width="1.67" height="4.00" rx="0" fill="#03a9f4" />
<rect x="1351.07" y="624.95" width="0.97" height="4.00" rx="0" fill="#ffa000" />
<rect x="1352.04" y="624.95" width="1.39" height="4.00" rx="0" fill="#03a9f4" />
<rect x="1353.43" y="624.95" width="0.97" height="4.00" rx="0" fill="#ffa000" />
<rect x="1354.41" y="624.95" width="0.69" height="4.00" rx="0" fill="#03a9f4" />
<rect x="1361.00" y="604.15" width="35.60" height="35.30" rx="4" fill="#3f4e55" />
<text x="1378.80" y="622.55" font-size="12" font-weight="normal" fill="#eceff1" text-anchor="middle" stroke="#eceff1" stroke-width="0.25">22</text>
<rect x="1364.90" y="624.95" width="27.80" height="4.00" rx="1.2" fill="#787878" />
<rect x="1367.68" y="624.95" width="0.97" height="4.00" rx="0" fill="#03a9f4" />
<rect x="1368.65" y="624.95" width="1.25" height="4.00" rx="0" fill="#ff6e40" />
<rect x="1369.90" y="624.95" width="1.39" height="4.00" rx="0" fill="#03a9f4" />
<rect x="1371.29" y="624.95" width="1.25" height="4.00" rx="0" fill="#ff6e40" />
<rect x="1372.55" y="624.95" width="0.97" height="4.00" rx="0" fill="#03a9f4" />
<rect x="1373.52" y="624.95" width="1.67" height="4.00" rx="0" fill="#ffa000" />
<rect x="1375.19" y="624.95" width="0.97" height="4.00" rx="0" fill="#03a9f4" />
<rect x="1376.16" y="624.95" width="1.25" height="4.00" rx="0" fill="#ff6e40" />
<rect x="1377.41" y="624.95" width="1.39" height="4.00" rx="0" fill="#03a9f4" />
<rect x="1378.80" y="624.95" width="1.67" height="4.00" rx="0" fill="#ff6e40" />
<rect x="1380.47" y="624.95" width="0.97" height="4.00" rx="0" fill="#03a9f4" />
<rect x="1381.44" y="624.95" width="1.25" height="4.00" rx="0" fill="#ff6e40" />
<rect x="1382.69" y="624.95" width="1.67" height="4.00" rx="0" fill="#03a9f4" />
<rect x="1384.36" y="624.95" width="0.97" height="4.00" rx="0" fill="#ff6e40" />
<rect x="1385.33" y="624.95" width="0.97" height="4.00" rx="0" fill="#03a9f4" />
<rect x="1386.31" y="624.95" width="1.67" height="4.00" rx="0" fill="#ff6e40" />
<rect x="1387.97" y="624.95" width="0.56" height="4.00" rx="0" fill="#03a9f4" />
<rect x="1398.60" y="604.15" width="35.60" height="35.30" rx="4" fill="#3f4e55" />
<text x="1416.40" y="622.55" font-size="12" font-weight="normal" fill="#eceff1" text-anchor="middle" stroke="#eceff1" stroke-width="0.25">23</text>
<rect x="1402.50" y="624.95" width="27.80" height="4.00" rx="1.2" fill="#787878" />
<rect x="1408.06" y="624.95" width="1.25" height="4.00" rx="0" fill="#03a9f4" />
<rect x="1409.31" y="624.95" width="0.97" height="4.00" rx="0" fill="#ff6e40" />
<rect x="1410.28" y="624.95" width="1.25" height="4.00" rx="0" fill="#03a9f4" />
<rect x="1411.54" y="624.95" width="1.39" height="4.00" rx="0" fill="#ff6e40" />
<rect x="1412.93" y="624.95" width="1.39" height="4.00" rx="0" fill="#03a9f4" />
<rect x="1414.32" y="624.95" width="0.97" height="4.00" rx="0" fill="#ff6e40" />
<rect x="1415.29" y="624.95" width="1.67" height="4.00" rx="0" fill="#03a9f4" />
<rect x="1416.96" y="624.95" width="1.67" height="4.00" rx="0" fill="#ff6e40" />
<rect x="1418.62" y="624.95" width="1.25" height="4.00" rx="0" fill="#03a9f4" />
<rect x="1419.88" y="624.95" width="0.97" height="4.00" rx="0" fill="#ffa000" />
<rect x="1420.85" y="624.95" width="1.67" height="4.00" rx="0" fill="#03a9f4" />
<rect x="1422.52" y="624.95" width="0.83" height="4.00" rx="0" fill="#ffa000" />
<rect x="1436.20" y="604.15" width="35.60" height="35.30" rx="4" fill="#3f4e55" />
<text x="1454.00" y="622.55" font-size="12" font-weight="normal" fill="#eceff1" text-anchor="middle" stroke="#eceff1" stroke-width="0.25">24</text>
<rect x="1440.10" y="624.95" width="27.80" height="4.00" rx="1.2" fill="#787878" />
<rect x="1448.44" y="624.95" width="1.25" height="4.00" rx="0" fill="#03a9f4" />
<rect x="1449.69" y="624.95" width="1.67" height="4.00" rx="0" fill="#ff6e40" />
<rect x="1451.36" y="624.95" width="1.39" height="4.00" rx="0" fill="#03a9f4" />
<rect x="1452.75" y="624.95" width="0.97" height="4.00" rx="0" fill="#ff6e40" />
<rect x="1453.72" y="624.95" width="1.39" height="4.00" rx="0" fill="#03a9f4" />
<rect x="1455.11" y="624.95" width="1.39" height="4.00" rx="0" fill="#ff6e40" />
<rect x="1456.50" y="624.95" width="0.28" height="4.00" rx="0" fill="#03a9f4" />
<rect x="1473.80" y="604.15" width="35.60" height="35.30" rx="4" fill="#3f4e55" />
<text x="1491.60" y="622.55" font-size="12" font-weight="normal" fill="#eceff1" text-anchor="middle" stroke="#eceff1" stroke-width="0.25">25</text>
<rect x="1477.70" y="624.95" width="27.80" height="4.00" rx="1.2" fill="#787878" />
<rect x="1248.20" y="641.80" width="35.60" height="35.30" rx="4" fill="#3f4e55" />
<text x="1266.00" y="660.20" font-size="12" font-weight="normal" fill="#eceff1" text-anchor="middle" stroke="#eceff1" stroke-width="0.25">26</text>
<rect x="1252.10" y="662.60" width="27.80" height="4.00" rx="1.2" fill="#787878" />
<rect x="1258.22" y="662.60" width="0.83" height="4.00" rx="0" fill="#03a9f4" />
<rect x="1259.05" y="662.60" width="4.73" height="4.00" rx="0" fill="#ff6e40" />
<rect x="1264.61" y="662.60" width="4.45" height="4.00" rx="0" fill="#ff6e40" />
<rect x="1269.06" y="662.60" width="0.83" height="4.00" rx="0" fill="#03a9f4" />
<rect x="1285.80" y="641.80" width="35.60" height="35.30" rx="4" fill="#3f4e55" />
<text x="1303.60" y="660.20" font-size="12" font-weight="normal" fill="#eceff1" text-anchor="middle" stroke="#eceff1" stroke-width="0.25">27</text>
<rect x="1289.70" y="662.60" width="27.80" height="4.00" rx="1.2" fill="#787878" />
<rect x="1297.48" y="662.60" width="0.83" height="4.00" rx="0" fill="#03a9f4" />
<rect x="1298.32" y="662.60" width="3.89" height="4.00" rx="0" fill="#ff6e40" />
<rect x="1303.04" y="662.60" width="4.17" height="4.00" rx="0" fill="#ff6e40" />
<rect x="1307.21" y="662.60" width="0.83" height="4.00" rx="0" fill="#03a9f4" />
<rect x="1323.40" y="641.80" width="35.60" height="35.30" rx="4" fill="#3f4e55" />
<text x="1341.20" y="660.20" font-size="12" font-weight="normal" fill="#eceff1" text-anchor="middle" stroke="#eceff1" stroke-width="0.25">28</text>
<rect x="1327.30" y="662.60" width="27.80" height="4.00" rx="1.2" fill="#787878" />
<rect x="1334.25" y="662.60" width="0.83" height="4.00" rx="0" fill="#03a9f4" />
<rect x="1335.08" y="662.60" width="3.89" height="4.00" rx="0" fill="#ff6e40" />
<rect x="1339.81" y="662.60" width="4.17" height="4.00" rx="0" fill="#ff6e40" />
<rect x="1343.98" y="662.60" width="0.83" height="4.00" rx="0" fill="#03a9f4" />
<rect x="1361.00" y="641.80" width="35.60" height="35.30" rx="4" fill="#3f4e55" />
<text x="1378.80" y="660.20" font-size="12" font-weight="normal" fill="#eceff1" text-anchor="middle" stroke="#eceff1" stroke-width="0.25">29</text>
<rect x="1364.90" y="662.60" width="27.80" height="4.00" rx="1.2" fill="#787878" />
<rect x="1371.85" y="662.60" width="0.83" height="4.00" rx="0" fill="#03a9f4" />
<rect x="1372.68" y="662.60" width="3.89" height="4.00" rx="0" fill="#ff6e40" />
<rect x="1377.41" y="662.60" width="3.89" height="4.00" rx="0" fill="#ff6e40" />
<rect x="1381.30" y="662.60" width="0.83" height="4.00" rx="0" fill="#03a9f4" />
<rect x="1398.60" y="641.80" width="35.60" height="35.30" rx="4" fill="#3f4e55" />
<text x="1416.40" y="660.20" font-size="12" font-weight="normal" fill="#eceff1" text-anchor="middle" stroke="#eceff1" stroke-width="0.25">30</text>
<rect x="1402.50" y="662.60" width="27.80" height="4.00" rx="1.2" fill="#787878" />
<rect x="1409.45" y="662.60" width="0.83" height="4.00" rx="0" fill="#03a9f4" />
<rect x="1410.28" y="662.60" width="4.73" height="4.00" rx="0" fill="#ff6e40" />
<rect x="1415.84" y="662.60" width="3.34" height="4.00" rx="0" fill="#ff6e40" />
<rect x="1419.18" y="662.60" width="0.83" height="4.00" rx="0" fill="#03a9f4" />
<rect x="1436.20" y="641.80" width="35.60" height="35.30" rx="4" fill="#3f4e55" />
<text x="1454.00" y="660.20" font-size="12" font-weight="normal" fill="#eceff1" text-anchor="middle" stroke="#eceff1" stroke-width="0.25">31</text>
<rect x="1440.10" y="662.60" width="20.29" height="4.00" rx="1.2" fill="#787878" />
<rect x="1447.05" y="662.60" width="0.83" height="4.00" rx="0" fill="#03a9f4" />
<rect x="1447.88" y="662.60" width="4.17" height="4.00" rx="0" fill="#ff6e40" />
<rect x="1452.89" y="662.60" width="3.61" height="4.00" rx="0" fill="#ff6e40" />
<rect x="1456.50" y="662.60" width="0.83" height="4.00" rx="0" fill="#03a9f4" />
</svg>
</body></html>
